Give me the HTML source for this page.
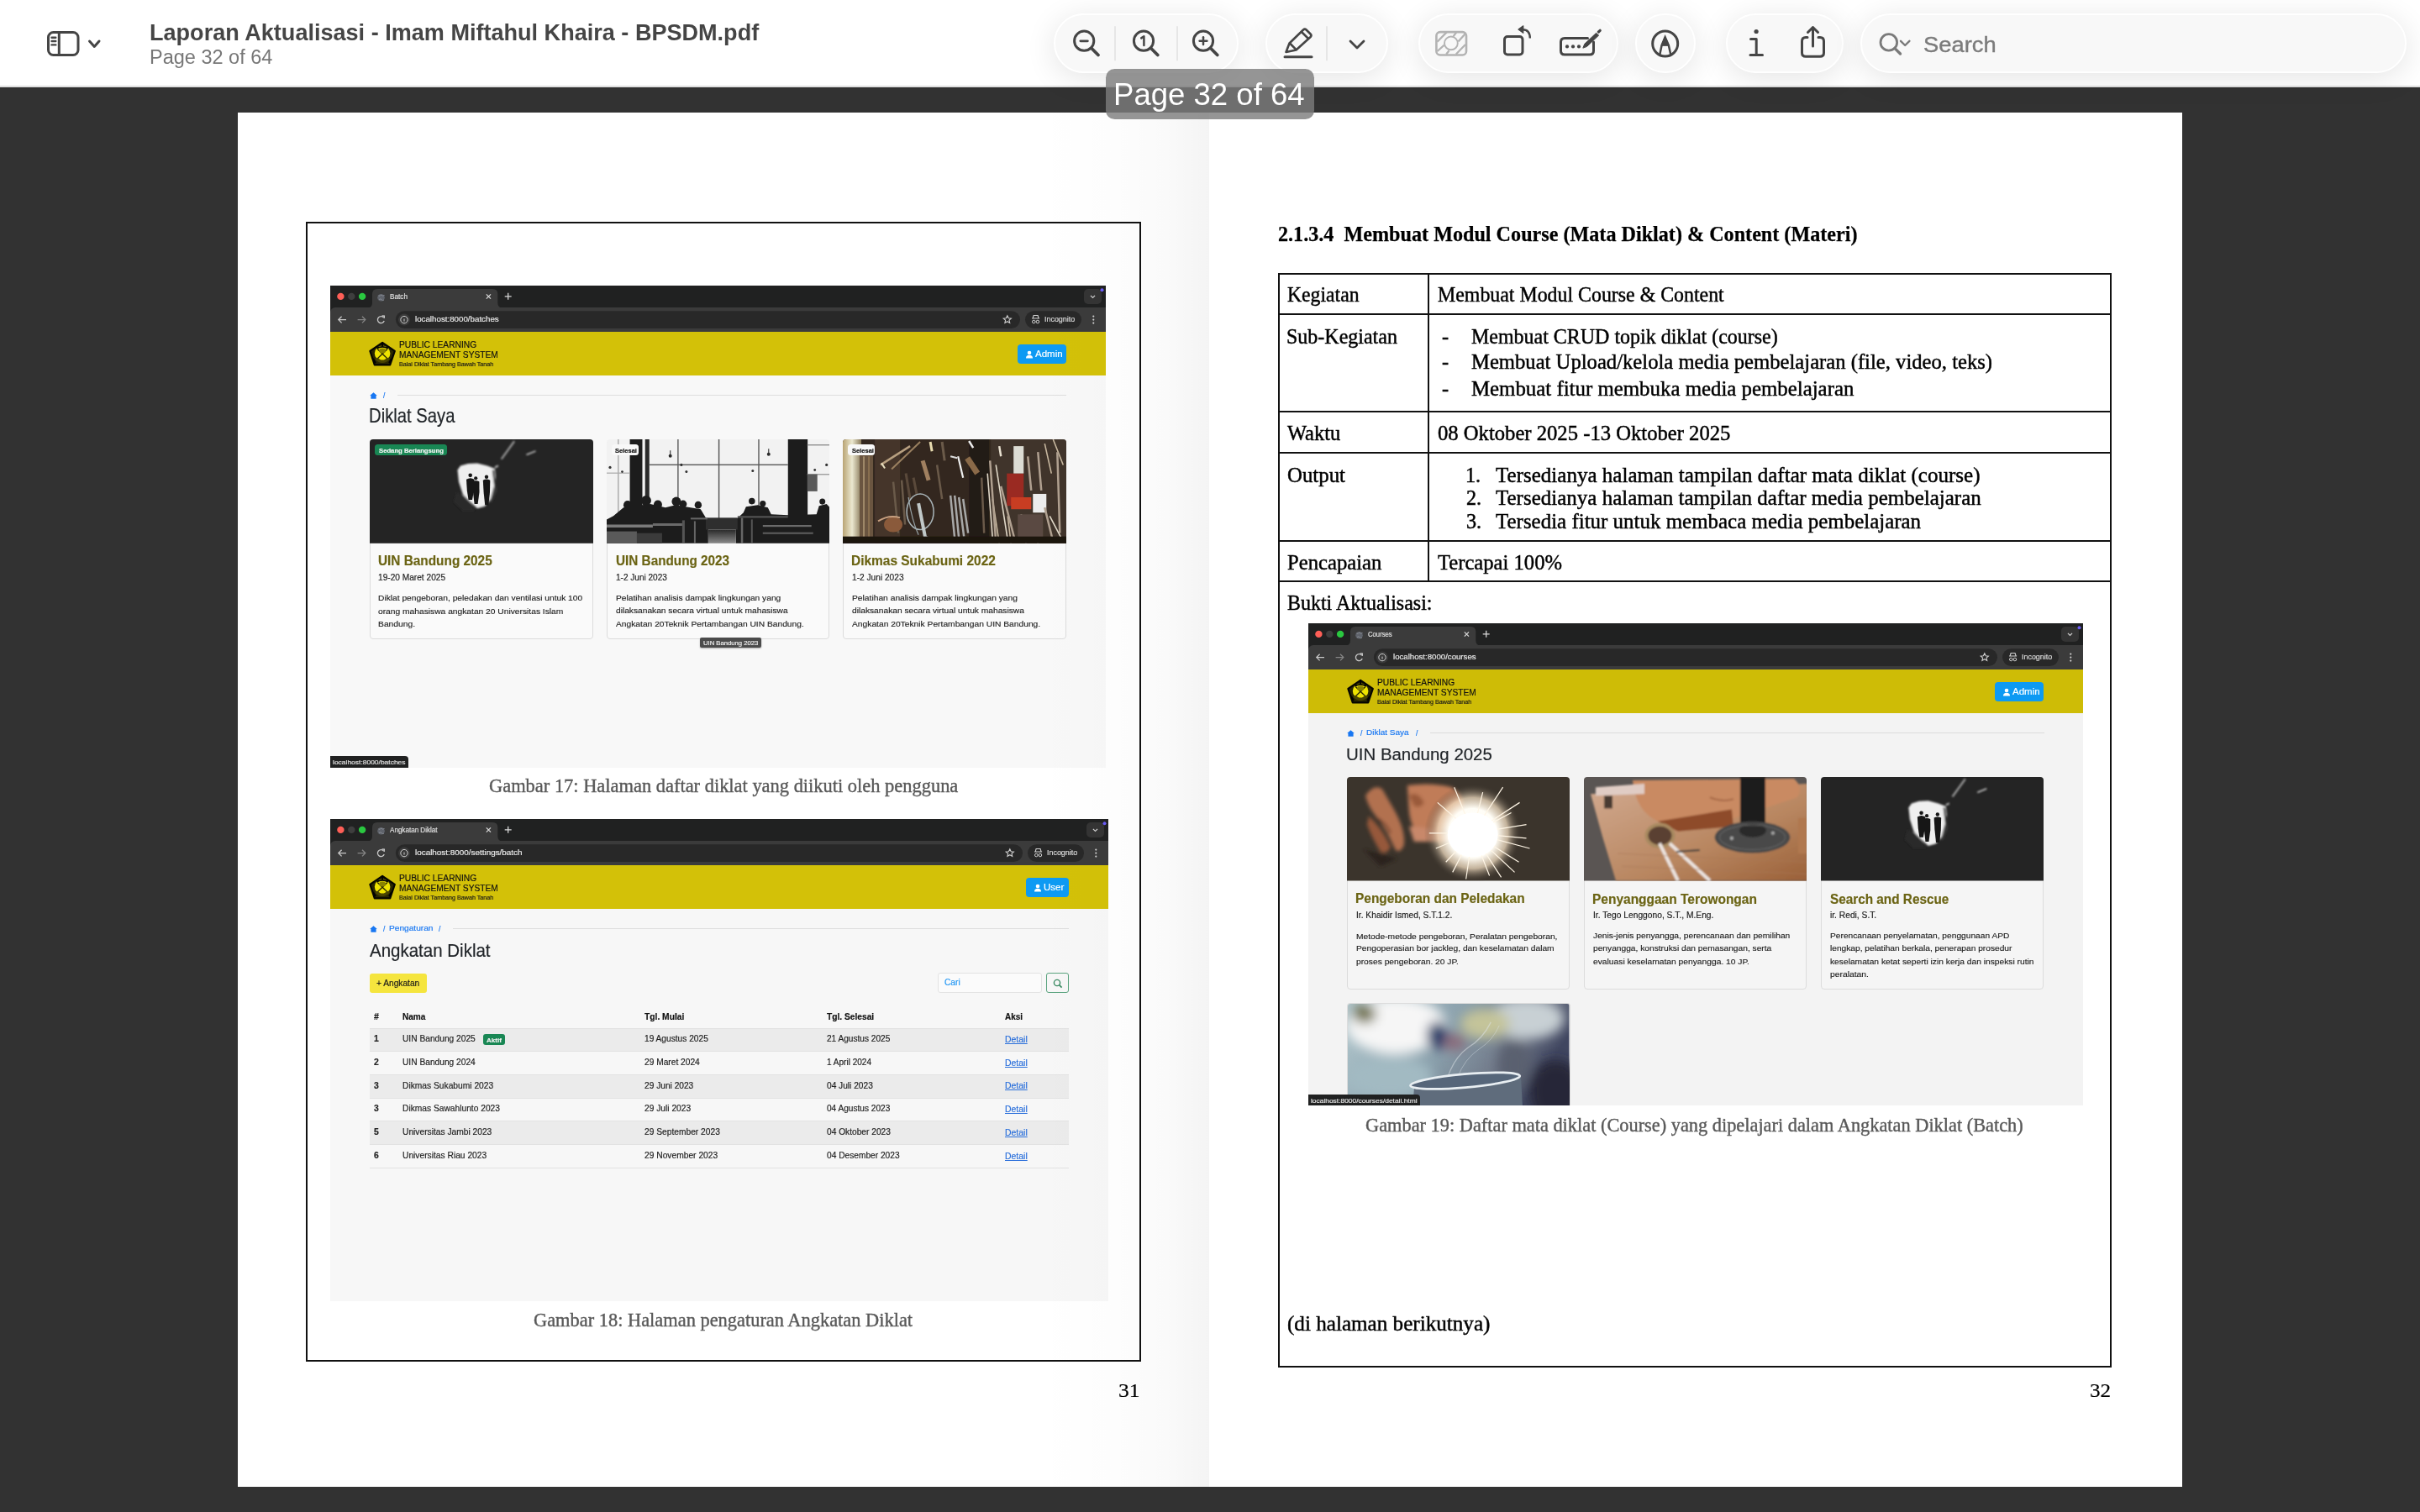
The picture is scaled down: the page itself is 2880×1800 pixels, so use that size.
<!DOCTYPE html>
<html><head><meta charset="utf-8"><style>
*{margin:0;padding:0;box-sizing:border-box}
html,body{width:2880px;height:1800px;overflow:hidden;background:#323232;font-family:"Liberation Sans",sans-serif}
.a{position:absolute}
.t{white-space:pre;line-height:1}
.pill{background:#f8f8f8;border:2px solid #fff;border-radius:36px;box-shadow:0 6px 36px rgba(0,0,0,0.11)}

</style></head><body>
<div class="a" style="left:0;top:0;width:2880px;height:102px;background:#fff"></div>
<div class="a" style="left:0;top:102px;width:2880px;height:1px;background:#dadada"></div>
<div class="a" style="left:0;top:103px;width:2880px;height:1px;background:#e6e6e6"></div>
<div class="a" style="left:0;top:104px;width:2880px;height:1px;background:#272727"></div>
<div class="a t" style="left:178.40px;top:25.85px;font-family:'Liberation Sans', sans-serif;font-size:27.00px;font-weight:bold;color:#454545;transform:scaleX(1.0022);transform-origin:0 0">Laporan Aktualisasi - Imam Miftahul Khaira - BPSDM.pdf</div>
<div class="a t" style="left:178.38px;top:57.45px;font-family:'Liberation Sans', sans-serif;font-size:23.00px;font-weight:normal;color:#777;transform:scaleX(1.0222);transform-origin:0 0">Page 32 of 64</div>
<div class="a pill" style="left:1254px;top:16px;width:220px;height:71px"></div>
<div class="a pill" style="left:1506px;top:16px;width:146px;height:71px"></div>
<div class="a pill" style="left:1688px;top:16px;width:238px;height:71px"></div>
<div class="a pill" style="left:1946px;top:16px;width:72px;height:71px"></div>
<div class="a pill" style="left:2054px;top:16px;width:140px;height:71px"></div>
<div class="a pill" style="left:2214px;top:16px;width:650px;height:71px"></div>
<svg class="a" style="left:0;top:0" width="2880" height="104" viewBox="0 0 2880 104" fill="none" stroke="#454545" stroke-width="3" stroke-linecap="round" stroke-linejoin="round">
<rect x="57.5" y="38.5" width="35.5" height="27" rx="6"/>
<line x1="70.3" y1="38.5" x2="70.3" y2="65.5"/>
<g stroke-width="2.4"><line x1="61.5" y1="44.7" x2="66.3" y2="44.7"/><line x1="61.5" y1="49" x2="66.3" y2="49"/><line x1="61.5" y1="53.4" x2="66.3" y2="53.4"/></g>
<polyline points="106.5,49 112.3,55.5 118,49" stroke-width="3"/>
<!-- zoom out -->
<circle cx="1290.2" cy="48.7" r="11.6"/><line x1="1299" y1="57.5" x2="1307" y2="65.5" stroke-width="3.8"/><line x1="1285.8" y1="48.8" x2="1294.4" y2="48.8" stroke-width="2.7"/>
<!-- zoom 1 -->
<circle cx="1361" cy="48.7" r="11.6"/><line x1="1369.8" y1="57.5" x2="1377.8" y2="65.5" stroke-width="3.8"/><polyline points="1358.2,45.4 1361.4,43.3 1361.4,54" stroke-width="2.5"/>
<!-- zoom in -->
<circle cx="1432" cy="48.7" r="11.6"/><line x1="1440.8" y1="57.5" x2="1448.8" y2="65.5" stroke-width="3.8"/><line x1="1427.6" y1="48.7" x2="1436.4" y2="48.7" stroke-width="2.5"/><line x1="1432" y1="44.3" x2="1432" y2="53.1" stroke-width="2.5"/>
<g stroke="#e6e6e6" stroke-width="2"><line x1="1327" y1="32" x2="1327" y2="71.5"/><line x1="1401" y1="32" x2="1401" y2="71.5"/><line x1="1579" y1="32" x2="1579" y2="71.5"/></g>
<!-- pencil -->
<path d="M1530.5,62 L1534.5,51.5 L1551,35.5 Q1552.8,33.8 1554.6,35.5 L1559.6,40.5 Q1561.3,42.3 1559.6,44 L1542.5,59.5 Z" stroke-width="2.6"/>
<line x1="1535.5" y1="52" x2="1541.8" y2="58.3" stroke-width="2.6"/><line x1="1549.5" y1="38.5" x2="1556.3" y2="45.2" stroke-width="2.6"/>
<line x1="1529" y1="67.7" x2="1561" y2="67.7" stroke-width="3"/>
<polyline points="1607,49 1615,57 1623,49" stroke-width="2.8"/>
<!-- redact -->
<g stroke="#b3b3b3" stroke-width="2.6" stroke-linecap="butt"><rect x="1709.4" y="38.1" width="35.6" height="27.4" rx="4.5"/><circle cx="1726.9" cy="51.4" r="7.9" stroke-width="1.9"/>
<line x1="1710.5" y1="49.8" x2="1721.6" y2="38.4" stroke-width="2.3"/><line x1="1710.5" y1="61" x2="1718.8" y2="53.6" stroke-width="2.3"/><line x1="1729.6" y1="43.4" x2="1733.2" y2="38.4" stroke-width="2.3"/>
<line x1="1735.4" y1="49.6" x2="1744" y2="39.9" stroke-width="2.3"/><line x1="1721.2" y1="64.5" x2="1724.6" y2="60.2" stroke-width="2.3"/><line x1="1732.8" y1="64.5" x2="1744" y2="53" stroke-width="2.3"/></g>
<!-- rotate -->
<rect x="1790.5" y="43.5" width="21.5" height="21.5" rx="3.5"/>
<path d="M1820.8,45.5 Q1820.8,35.2 1812,35.2" stroke-width="2.4" stroke-linecap="butt"/><path d="M1807,35.1 L1812.8,30.8 L1812.8,39.3 Z" fill="#454545" stroke-width="1.2"/>
<!-- signature -->
<path d="M1889.5,45.5 L1862,45.5 Q1857.5,45.5 1857.5,50 L1857.5,60.5 Q1857.5,65 1862,65 L1892,65 Q1896.5,65 1896.5,60.5 L1896.5,50" stroke-width="3"/>
<circle cx="1865" cy="55.4" r="2.1" fill="#454545" stroke="none"/><circle cx="1872" cy="55.4" r="2.1" fill="#454545" stroke="none"/><circle cx="1879" cy="55.4" r="2.1" fill="#454545" stroke="none"/>
<path d="M1884,56.8 L1885.8,52.3 L1899.6,39.3 L1902.6,42.1 L1888.8,55.2 Z" fill="#454545" stroke-width="1"/><line x1="1902.4" y1="38" x2="1904.2" y2="36.3" stroke-width="3.2"/>
<!-- markup -->
<circle cx="1981.7" cy="52" r="15"/>
<path d="M1975.3,65 L1977.6,53.8 L1981.6,44.2 L1985.8,53.8 L1988.3,65" stroke-width="2.5" stroke-linejoin="miter"/><path d="M1977.2,54 L1981.6,43.5 L1986.2,54 Z" fill="#454545" stroke-width="1"/>
<!-- info -->
<circle cx="2090.1" cy="37.5" r="2.6" fill="#454545" stroke="none"/>
<polyline points="2083.5,46.5 2090.2,46.5 2090.2,65.5" stroke-width="3"/><line x1="2083" y1="65.5" x2="2097.5" y2="65.5" stroke-width="3"/>
<!-- share -->
<path d="M2151,44.5 L2149,44.5 Q2144.5,44.5 2144.5,49 L2144.5,63 Q2144.5,67.3 2149,67.3 L2166,67.3 Q2170.5,67.3 2170.5,63 L2170.5,49 Q2170.5,44.5 2166,44.5 L2164,44.5" stroke-width="3"/>
<line x1="2157.5" y1="55" x2="2157.5" y2="33"/><polyline points="2151.5,38.5 2157.5,32.5 2163.5,38.5"/>
<!-- search -->
<g stroke="#7a7a7a" stroke-width="2.8"><circle cx="2247.8" cy="50.4" r="9.8"/><line x1="2255" y1="57.6" x2="2261.5" y2="64" stroke-width="3.4"/><polyline points="2262,48.8 2267.2,54 2272.4,48.8" stroke-width="2.4"/></g>
</svg>
<div class="a t" style="left:2288.95px;top:39.90px;font-family:'Liberation Sans', sans-serif;font-size:26.00px;font-weight:normal;color:#7b7b7b;transform:scaleX(1.0511);transform-origin:0 0;-webkit-text-stroke:0.4px #7b7b7b">Search</div>
<div class="a" style="left:283px;top:134px;width:1156px;height:1636px;background:#fff"></div>
<div class="a" style="left:1439px;top:134px;width:1158px;height:1636px;background:#fff"></div>
<div class="a" style="left:364px;top:264px;width:994px;height:1357px;border:2.3px solid #111"></div>
<div class="a" style="left:393.0px;top:340.0px;width:923.0px;height:574.0px;background:#f8f8f8;overflow:hidden"></div>
<div class="a" style="left:393.0px;top:340.0px;width:923.0px;height:32px;background:#202121"></div>
<svg class="a" style="left:437.0px;top:340.0px" width="170" height="27" viewBox="0 0 170 27"><path d="M0,26.5 Q6,26.5 6,20.5 V10 Q6,4 12,4 H149.3 Q155.3,4 155.3,10 V20.5 Q155.3,26.5 161.3,26.5 Z" fill="#3b3b3b"/></svg>
<div class="a" style="left:393.0px;top:366.0px;width:923.0px;height:29px;background:#3b3b3b;border-radius:6px 0 0 0"></div>
<svg class="a" style="left:393.0px;top:340.0px" width="923.0" height="56" viewBox="0 0 923.0 56"><circle cx="12.4" cy="12.9" r="4.2" fill="#fe5f57"/><circle cx="25.3" cy="12.9" r="4.2" fill="#3e3e3e"/><circle cx="38.1" cy="12.9" r="4.2" fill="#2ac840"/><circle cx="60.5" cy="14.2" r="4.3" fill="#5f636b"/><path d="M57.5,12 q2,1 3,-1 q2,2 4,0.5 M58,16.5 q2,-1.5 3.5,0.5 q1,1.2 2.5,0" stroke="#8a8e96" stroke-width="0.9" fill="none"/><path d="M185.8,10.4 L191,15.6 M191,10.4 L185.8,15.6" stroke="#d8d8d8" stroke-width="1.3"/><path d="M211.7,8.8 V16.8 M207.7,12.8 H215.7" stroke="#d8d8d8" stroke-width="1.3"/><rect x="897.0" y="4" width="21" height="18" rx="5" fill="#343434"/><path d="M904.9,11.8 l2.6,2.6 l2.6,-2.6" stroke="#d0d0d0" stroke-width="1.2" fill="none"/><circle cx="918.5" cy="5.2" r="2" fill="#6b5cf6"/><path d="M19,40.6 H10 M13.6,36.8 L9.8,40.6 L13.6,44.4" stroke="#c8c8c8" stroke-width="1.3" fill="none"/><path d="M32.6,40.6 H41.6 M38,36.8 L41.8,40.6 L38,44.4" stroke="#858585" stroke-width="1.3" fill="none"/><path d="M63.6,38.2 A4,4 0 1 0 64.2,42" stroke="#c8c8c8" stroke-width="1.3" fill="none"/><path d="M61.6,36 L64.4,36.2 L64.2,39" stroke="#c8c8c8" stroke-width="1.3" fill="none"/><rect x="77.9" y="30.2" width="743.1" height="20.8" rx="10.4" fill="#282828"/><circle cx="88" cy="40.6" r="7" fill="#3a3a3a"/><circle cx="88" cy="40.6" r="4.2" stroke="#d0d0d0" stroke-width="1" fill="none"/><path d="M88,39.6 V42.6" stroke="#d0d0d0" stroke-width="1"/><path d="M805.8,35.8 l1.4,3 3.2,0.3 -2.4,2.1 0.7,3.2 -2.9,-1.7 -2.9,1.7 0.7,-3.2 -2.4,-2.1 3.2,-0.3 z" stroke="#d0d0d0" stroke-width="1.1" fill="none"/><rect x="827.0" y="30.2" width="67" height="20.8" rx="10.4" fill="#282828"/><path d="M835.1,39 h9 M836.1,39 l1,-3.5 h5 l1,3.5" stroke="#d0d0d0" stroke-width="1.1" fill="none"/><circle cx="837.3" cy="43" r="1.8" stroke="#d0d0d0" stroke-width="1" fill="none"/><circle cx="841.9" cy="43" r="1.8" stroke="#d0d0d0" stroke-width="1" fill="none"/><circle cx="908.3" cy="36.6" r="1.1" fill="#d0d0d0"/><circle cx="908.3" cy="40.6" r="1.1" fill="#d0d0d0"/><circle cx="908.3" cy="44.6" r="1.1" fill="#d0d0d0"/></svg>
<div class="a" style="left:393.0px;top:395.0px;width:923.0px;height:52px;background:#d3c108"></div>
<svg class="a" style="left:438.5px;top:406.0px" width="32" height="31" viewBox="0 0 32 31"><path d="M16.1,1.8 L30.8,11.8 L25.2,28.4 L6.8,28.4 L1.4,11.8 Z" fill="#2a2700" stroke="#050500" stroke-width="2.2" stroke-linejoin="round"/><circle cx="16.1" cy="14.8" r="9.3" fill="#eee300"/><path d="M7.5,22 Q16,30 24.7,22 L24,19.5 Q16,24 8.2,19.5 Z" fill="#4a4500"/><path d="M9.3,8.6 Q16.1,5.2 22.9,8.6" stroke="#000" stroke-width="1.8" fill="none"/><rect x="15.2" y="1.8" width="1.8" height="4.6" fill="#000"/><path d="M10.2,9.5 L21.8,20.8 M22,9.5 L10.4,20.8" stroke="#2a2600" stroke-width="1.4"/><ellipse cx="16.1" cy="11.5" rx="4" ry="3" fill="#8a8300"/><ellipse cx="16.1" cy="20.5" rx="3.6" ry="2" fill="#eee300"/><path d="M5,21 L8,26 M27,21 L24,26" stroke="#000" stroke-width="2"/></svg>
<div class="a t" style="left:475.20px;top:404.82px;font-family:'Liberation Sans', sans-serif;font-size:10.80px;font-weight:normal;color:#111;transform:scaleX(0.9483);transform-origin:0 0;-webkit-text-stroke:0.18px #111">PUBLIC LEARNING</div>
<div class="a t" style="left:475.20px;top:417.02px;font-family:'Liberation Sans', sans-serif;font-size:10.80px;font-weight:normal;color:#111;transform:scaleX(0.9457);transform-origin:0 0;-webkit-text-stroke:0.18px #111">MANAGEMENT SYSTEM</div>
<div class="a t" style="left:475.20px;top:430.72px;font-family:'Liberation Sans', sans-serif;font-size:6.80px;font-weight:normal;color:#1a1a1a;transform:scaleX(1.0519);transform-origin:0 0;-webkit-text-stroke:0.18px #1a1a1a">Balai Diklat Tambang Bawah Tanah</div>
<div class="a" style="left:1211.0px;top:409.7px;width:58.0px;height:23.8px;background:#0d9af3;border-radius:4px"></div>
<svg class="a" style="left:1219.5px;top:416.5px" width="10" height="10" viewBox="0 0 10 10"><circle cx="5" cy="3" r="2.3" fill="#fff"/><path d="M1,9.5 Q1,5.8 5,5.8 Q9,5.8 9,9.5 Z" fill="#fff"/></svg>
<div class="a t" style="left:1231.50px;top:415.73px;font-family:'Liberation Sans', sans-serif;font-size:11.50px;font-weight:normal;color:#fff;transform:scaleX(1.0001);transform-origin:0 0;-webkit-text-stroke:0.18px #fff">Admin</div>
<div class="a t" style="left:463.60px;top:348.50px;font-family:'Liberation Sans', sans-serif;font-size:8.70px;font-weight:normal;color:#e0e0e0;transform:scaleX(0.9427);transform-origin:0 0;-webkit-text-stroke:0.18px #e0e0e0">Batch</div>
<div class="a t" style="left:493.70px;top:375.98px;font-family:'Liberation Sans', sans-serif;font-size:9.20px;font-weight:normal;color:#e8e8e8;transform:scaleX(1.0605);transform-origin:0 0;-webkit-text-stroke:0.18px #e8e8e8">localhost:8000/batches</div>
<div class="a t" style="left:1243.20px;top:376.32px;font-family:'Liberation Sans', sans-serif;font-size:8.80px;font-weight:normal;color:#dcdcdc;transform:scaleX(1.0137);transform-origin:0 0;-webkit-text-stroke:0.18px #dcdcdc">Incognito</div>
<svg class="a" style="left:439.5px;top:467.3px" width="9" height="8" viewBox="0 0 9 8"><path d="M4.5,0.3 L8.8,4 L7.6,4 L7.6,7.8 L1.4,7.8 L1.4,4 L0.2,4 Z" fill="#1877f2"/></svg>
<div class="a t" style="left:455.50px;top:466.77px;font-family:'Liberation Sans', sans-serif;font-size:8.50px;font-weight:normal;color:#1877f2;transform:scaleX(1.0001);transform-origin:0 0;-webkit-text-stroke:0.18px #1877f2">/</div>
<div class="a" style="left:472.6px;top:470.3px;width:796.4px;height:1px;background:#dedede"></div>
<div class="a t" style="left:439.13px;top:484.11px;font-family:'Liberation Sans', sans-serif;font-size:23.40px;font-weight:normal;color:#212529;transform:scaleX(0.8665);transform-origin:0 0;-webkit-text-stroke:0.18px #212529">Diklat Saya</div>
<div class="a" style="left:439.5px;top:523.5px;width:266.0px;height:237.0px;background:#fafafa;border:1px solid #dcdcdc;border-radius:4px"></div>
<div class="a" style="left:439.5px;top:523.0px;width:266.0px;height:123.8px;border-radius:4px 4px 0 0;overflow:hidden"><svg width="266.0" height="123.8" viewBox="0 0 266 122" preserveAspectRatio="none" style="display:block"><defs><filter id="g1" x="-20%" y="-20%" width="140%" height="140%"><feGaussianBlur stdDeviation="1.1"/></filter><filter id="g1b" x="-20%" y="-20%" width="140%" height="140%"><feGaussianBlur stdDeviation="0.5"/></filter></defs><rect width="266" height="122" fill="#242424"/><g filter="url(#g1)"><polygon points="104.5,36 108,31 117,28.5 128,28 140,31 149,34.5 150,45 147,60 144,70 137,78.5 128,81 120,74 111,65 106,50" fill="#efefef"/><path d="M156.7,23.2 L172.1,2.2" stroke="#9a9a9a" stroke-width="2.2"/><path d="M186.5,18.2 L197.5,13.8" stroke="#b8b8b8" stroke-width="1.8"/><path d="M149,33 L153,31" stroke="#bbb" stroke-width="2"/><polygon points="103,62 112,67 120,76 125,84 110,84 100,74" fill="#2c2c2c"/><path d="M147,36 L150,60 L144,74" stroke="#3a3a3a" stroke-width="2.5" fill="none"/></g><g fill="#161616" filter="url(#g1b)"><circle cx="119.7" cy="42.2" r="2.3"/><path d="M115,47 Q119.7,44 124.5,47 L124,60 L122,71 L117.5,71 L115.8,60 Z"/><circle cx="126.2" cy="45.6" r="2.1"/><path d="M122.2,49.5 Q126.2,47.4 130.4,49.5 L130.5,62 L128.6,76 L124.6,76 L123,62 Z"/><circle cx="139" cy="44" r="2.2"/><path d="M134.8,48 Q139,45.8 143.3,48 L143,62 L141.4,77 L137.2,77 L135.6,62 Z"/></g></svg></div>
<div class="a" style="left:445.5px;top:529.2px;width:86.7px;height:13.3px;background:#198754;border-radius:3.5px"></div>
<div class="a t" style="left:450.50px;top:532.64px;font-family:'Liberation Sans', sans-serif;font-size:7.60px;font-weight:bold;color:#f4f4f4;transform:scaleX(1.0130);transform-origin:0 0;-webkit-text-stroke:0.18px #f4f4f4">Sedang Berlangsung</div>
<div class="a t" style="left:450.40px;top:659.23px;font-family:'Liberation Sans', sans-serif;font-size:16.20px;font-weight:bold;color:#6b6414;transform:scaleX(0.9489);transform-origin:0 0;-webkit-text-stroke:0.18px #6b6414">UIN Bandung 2025</div>
<div class="a t" style="left:450.40px;top:682.50px;font-family:'Liberation Sans', sans-serif;font-size:10.00px;font-weight:normal;color:#1e1e1e;transform:scaleX(1.0141);transform-origin:0 0;-webkit-text-stroke:0.18px #1e1e1e">19-20 Maret 2025</div>
<div class="a t" style="left:450.40px;top:707.38px;font-family:'Liberation Sans', sans-serif;font-size:9.90px;font-weight:normal;color:#222;transform:scaleX(1.0349);transform-origin:0 0;-webkit-text-stroke:0.15px #222">Diklat pengeboran, peledakan dan ventilasi untuk 100</div>
<div class="a t" style="left:450.40px;top:722.59px;font-family:'Liberation Sans', sans-serif;font-size:9.90px;font-weight:normal;color:#222;transform:scaleX(1.0373);transform-origin:0 0;-webkit-text-stroke:0.15px #222">orang mahasiswa angkatan 20 Universitas Islam</div>
<div class="a t" style="left:450.40px;top:737.88px;font-family:'Liberation Sans', sans-serif;font-size:9.90px;font-weight:normal;color:#222;transform:scaleX(1.0448);transform-origin:0 0;-webkit-text-stroke:0.15px #222">Bandung.</div>
<div class="a" style="left:721.8px;top:523.5px;width:265.7px;height:237.0px;background:#fafafa;border:1px solid #dcdcdc;border-radius:4px"></div>
<div class="a" style="left:721.8px;top:523.0px;width:265.7px;height:123.8px;border-radius:4px 4px 0 0;overflow:hidden"><svg width="265.7" height="123.8" viewBox="0 0 266 122" preserveAspectRatio="none" style="display:block"><defs><filter id="g2"><feGaussianBlur stdDeviation="0.6"/></filter><linearGradient id="g2f" x1="0" y1="0" x2="0" y2="1"><stop offset="0" stop-color="#2a2a2a"/><stop offset="1" stop-color="#8a8a8a"/></linearGradient></defs><rect width="266" height="122" fill="#f2f2f2"/><g filter="url(#g2)"><rect x="27.6" y="0" width="14.9" height="90" fill="#1c1c1c"/><rect x="45.8" y="0" width="5" height="90" fill="#2a2a2a"/><rect x="216" y="0" width="23.4" height="100" fill="#1e1e1e"/><rect x="13" y="0" width="1.6" height="88" fill="#b0b0b0"/><rect x="84.3" y="0" width="1.4" height="84" fill="#5a5a5a"/><rect x="133" y="0" width="1.5" height="95" fill="#5a5a5a"/><rect x="180.5" y="0" width="1.4" height="82" fill="#5a5a5a"/><rect x="50" y="29.2" width="166" height="1.4" fill="#5a5a5a"/><rect x="0" y="39" width="27" height="1.2" fill="#aaa"/><rect x="239" y="6" width="27" height="1.3" fill="#8a8a8a"/><rect x="239" y="40.5" width="27" height="1.3" fill="#999"/><path d="M75.8,13 v6" stroke="#333" stroke-width="1.1"/><circle cx="75.8" cy="19.5" r="2" fill="#2a2a2a"/><path d="M193,11 v6" stroke="#333" stroke-width="1.1"/><circle cx="193" cy="17.5" r="2" fill="#2a2a2a"/><circle cx="4" cy="33" r="1.6" fill="#333"/><circle cx="18.5" cy="38" r="1.4" fill="#333"/><circle cx="89" cy="30" r="1.6" fill="#333"/><circle cx="95" cy="38" r="1.5" fill="#333"/><circle cx="174" cy="37" r="1.5" fill="#333"/><circle cx="262" cy="30" r="1.6" fill="#333"/><circle cx="248" cy="36" r="1.4" fill="#333"/><rect x="239" y="41" width="12" height="20" fill="#5a5a5a"/><g fill="#1c1c1c"><circle cx="25" cy="77" r="5"/><circle cx="47" cy="72" r="6"/><circle cx="61" cy="76.5" r="5"/><circle cx="83" cy="73" r="5.5"/><circle cx="91" cy="76" r="4.5"/><circle cx="109" cy="77" r="4.2"/><circle cx="173" cy="72.5" r="3.8"/><circle cx="186" cy="75.5" r="3.6"/><circle cx="257" cy="73" r="3.5"/></g><path d="M0,94 L8,90 L20,80 L35,78 L52,76 L70,80 L82,77 L100,80 L112,82 L118,92 L121,96 L121,122 L0,122 Z" fill="#1c1c1c"/><path d="M154,94 L163,86 L166,79 L180,77 L192,80 L196,88 L216,89 L250,88 L253,78 L262,76 L266,80 L266,122 L154,122 Z" fill="#1c1c1c"/><rect x="118" y="92" width="38" height="14" fill="#2e2e2e"/><rect x="121" y="106" width="33" height="16" fill="url(#g2f)"/><rect x="0" y="100" width="55" height="3.5" fill="#7a7a7a"/><rect x="55" y="98.5" width="35" height="3" fill="#6a6a6a"/><rect x="0" y="108" width="36" height="14" fill="#5a5a5a"/><rect x="36" y="110" width="30" height="12" fill="#3a3a3a"/><rect x="90" y="95" width="3" height="27" fill="#555"/><rect x="104" y="96" width="2" height="26" fill="#666"/><rect x="160" y="92" width="2.5" height="30" fill="#666"/><rect x="172" y="94" width="2" height="28" fill="#555"/><rect x="186" y="100.5" width="58" height="2.2" fill="#6a6a6a"/><rect x="186" y="109" width="60" height="2.2" fill="#5a5a5a"/><rect x="100" y="92" width="20" height="2" fill="#666"/><rect x="156" y="90" width="60" height="2" fill="#555"/></g></svg></div>
<div class="a" style="left:727.8px;top:529.2px;width:32.0px;height:13.3px;background:#f8f8f8;border-radius:3.5px"></div>
<div class="a t" style="left:732.30px;top:532.64px;font-family:'Liberation Sans', sans-serif;font-size:7.60px;font-weight:bold;color:#111;transform:scaleX(0.9897);transform-origin:0 0;-webkit-text-stroke:0.18px #111">Selesai</div>
<div class="a t" style="left:732.70px;top:658.93px;font-family:'Liberation Sans', sans-serif;font-size:16.20px;font-weight:bold;color:#6b6414;transform:scaleX(0.9447);transform-origin:0 0;-webkit-text-stroke:0.18px #6b6414">UIN Bandung 2023</div>
<div class="a t" style="left:732.70px;top:682.50px;font-family:'Liberation Sans', sans-serif;font-size:10.00px;font-weight:normal;color:#1e1e1e;transform:scaleX(1.0043);transform-origin:0 0;-webkit-text-stroke:0.18px #1e1e1e">1-2 Juni 2023</div>
<div class="a t" style="left:732.70px;top:706.88px;font-family:'Liberation Sans', sans-serif;font-size:9.90px;font-weight:normal;color:#222;transform:scaleX(1.0365);transform-origin:0 0;-webkit-text-stroke:0.15px #222">Pelatihan analisis dampak lingkungan yang</div>
<div class="a t" style="left:732.70px;top:722.19px;font-family:'Liberation Sans', sans-serif;font-size:9.90px;font-weight:normal;color:#222;transform:scaleX(1.0324);transform-origin:0 0;-webkit-text-stroke:0.15px #222">dilaksanakan secara virtual untuk mahasiswa</div>
<div class="a t" style="left:732.70px;top:737.59px;font-family:'Liberation Sans', sans-serif;font-size:9.90px;font-weight:normal;color:#222;transform:scaleX(1.0372);transform-origin:0 0;-webkit-text-stroke:0.15px #222">Angkatan 20Teknik Pertambangan UIN Bandung.</div>
<div class="a" style="left:1003.0px;top:523.5px;width:266.3px;height:237.0px;background:#fafafa;border:1px solid #dcdcdc;border-radius:4px"></div>
<div class="a" style="left:1003.0px;top:523.0px;width:266.3px;height:123.8px;border-radius:4px 4px 0 0;overflow:hidden"><svg width="266.3" height="123.8" viewBox="0 0 266 122" preserveAspectRatio="none" style="display:block"><defs><filter id="g3"><feGaussianBlur stdDeviation="0.7"/></filter><linearGradient id="g3l" x1="0" y1="0" x2="1" y2="0"><stop offset="0" stop-color="#b9a474"/><stop offset="0.5" stop-color="#ebe8d0"/><stop offset="1" stop-color="#8a7a5a"/></linearGradient></defs><rect width="266" height="122" fill="#33271f"/><g filter="url(#g3)"><rect x="0" y="0" width="22" height="115" fill="url(#g3l)"/><rect x="20" y="18" width="16" height="97" fill="#6a5440"/><rect x="24" y="20" width="2" height="95" fill="#a08a6a"/><rect x="30" y="20" width="2" height="95" fill="#8a7050"/><rect x="38" y="0" width="30" height="122" fill="#45352a"/><rect x="150" y="0" width="24" height="122" fill="#231a15"/><rect x="176" y="0" width="90" height="122" fill="#4a3d34" opacity="0.6"/><path d="M60,50 L66,110 M70,48 L74,100 M112,30 L118,70 M165,45 L168,110" stroke="#6a5a4a" stroke-width="2.5"/><path d="M250,0 L262,30 M240,5 L248,40 M196,90 L200,122 M178,70 L186,122" stroke="#c8b8a0" stroke-width="1.6"/><path d="M45,30 L80,8" stroke="#b8a080" stroke-width="2.5"/><path d="M58,35 L92,3" stroke="#9a8060" stroke-width="2"/><path d="M46,28 L50,34" stroke="#e8e0c0" stroke-width="2"/><path d="M104,3 L106,14" stroke="#e8dcb0" stroke-width="3"/><path d="M137,20 L143,45" stroke="#eee" stroke-width="2.2"/><path d="M128,20 L136,22" stroke="#ddd" stroke-width="2"/><path d="M95,25 L102,48" stroke="#a08060" stroke-width="5"/><path d="M148,22 L160,40" stroke="#8a6a48" stroke-width="7"/><path d="M150,2 L155,10" stroke="#eee" stroke-width="2.5"/><path d="M118,3 L121,25" stroke="#6a5a4a" stroke-width="3"/><path d="M186,8 L188,20" stroke="#e8e0d0" stroke-width="2.5"/><path d="M75,40 L80,70 M84,45 L88,65" stroke="#5a4a3a" stroke-width="3"/><ellipse cx="92" cy="85" rx="16" ry="21" stroke="#a8b4b8" stroke-width="1.5" fill="none"/><path d="M90,75 L98,115 L105,118" stroke="#c0c8c8" stroke-width="4" fill="none"/><path d="M78,68 Q82,95 90,112" stroke="#98a4a8" stroke-width="1.2" fill="none"/><path d="M128,66 L133,116 M133,66 L138,116 M138,68 L144,114 M143,70 L149,110" stroke="#a8a8a8" stroke-width="2.5"/><ellipse cx="60" cy="100" rx="11" ry="9" fill="#8a5a3a"/><path d="M42,96 Q55,88 68,92" stroke="#c8a080" stroke-width="2" fill="none"/><rect x="195" y="40" width="20" height="38" fill="#9a2c20"/><rect x="200" y="68" width="24" height="14" fill="#c83c24"/><rect x="226" y="64" width="16" height="22" fill="#ececec"/><rect x="203" y="8" width="12" height="32" fill="#dcdcd4"/><path d="M175,25 L182,120 M188,55 L205,120 M240,80 L250,120 M255,15 L258,110 M232,15 L236,60 M220,20 L224,60" stroke="#b0a090" stroke-width="2.5"/><path d="M172,40 L178,115 M182,30 L196,118 M246,90 L262,120" stroke="#e0d8c8" stroke-width="1.6"/><path d="M212,88 L218,122 M228,90 L232,122" stroke="#c8b8a8" stroke-width="2"/><rect x="208" y="88" width="30" height="30" fill="#5a4a42"/><rect x="0" y="114" width="266" height="8" fill="#1c1410"/></g></svg></div>
<div class="a" style="left:1009.0px;top:529.2px;width:32.0px;height:13.3px;background:#f8f8f8;border-radius:3.5px"></div>
<div class="a t" style="left:1013.50px;top:532.64px;font-family:'Liberation Sans', sans-serif;font-size:7.60px;font-weight:bold;color:#111;transform:scaleX(0.9897);transform-origin:0 0;-webkit-text-stroke:0.18px #111">Selesai</div>
<div class="a t" style="left:1012.94px;top:658.93px;font-family:'Liberation Sans', sans-serif;font-size:16.20px;font-weight:bold;color:#6b6414;transform:scaleX(0.9550);transform-origin:0 0;-webkit-text-stroke:0.18px #6b6414">Dikmas Sukabumi 2022</div>
<div class="a t" style="left:1013.90px;top:682.50px;font-family:'Liberation Sans', sans-serif;font-size:10.00px;font-weight:normal;color:#1e1e1e;transform:scaleX(1.0157);transform-origin:0 0;-webkit-text-stroke:0.18px #1e1e1e">1-2 Juni 2023</div>
<div class="a t" style="left:1013.90px;top:706.88px;font-family:'Liberation Sans', sans-serif;font-size:9.90px;font-weight:normal;color:#222;transform:scaleX(1.0402);transform-origin:0 0;-webkit-text-stroke:0.15px #222">Pelatihan analisis dampak lingkungan yang</div>
<div class="a t" style="left:1013.90px;top:722.19px;font-family:'Liberation Sans', sans-serif;font-size:9.90px;font-weight:normal;color:#222;transform:scaleX(1.0339);transform-origin:0 0;-webkit-text-stroke:0.15px #222">dilaksanakan secara virtual untuk mahasiswa</div>
<div class="a t" style="left:1013.90px;top:737.59px;font-family:'Liberation Sans', sans-serif;font-size:9.90px;font-weight:normal;color:#222;transform:scaleX(1.0391);transform-origin:0 0;-webkit-text-stroke:0.15px #222">Angkatan 20Teknik Pertambangan UIN Bandung.</div>
<div class="a" style="left:832.7px;top:758.5px;width:73px;height:12.3px;background:#4b4b4b;border-radius:2px;box-shadow:0 1px 2px rgba(0,0,0,.3)"></div>
<div class="a t" style="left:836.50px;top:761.85px;font-family:'Liberation Sans', sans-serif;font-size:7.00px;font-weight:normal;color:#f0f0f0;transform:scaleX(1.0980);transform-origin:0 0;-webkit-text-stroke:0.18px #f0f0f0">UIN Bandung 2023</div>
<div class="a" style="left:393.0px;top:900.0px;width:93.3px;height:13.5px;background:#202121;border-radius:0 4px 0 0"></div>
<div class="a t" style="left:396.00px;top:904.18px;font-family:'Liberation Sans', sans-serif;font-size:7.20px;font-weight:normal;color:#e0e0e0;transform:scaleX(1.1768);transform-origin:0 0;-webkit-text-stroke:0.18px #e0e0e0">localhost:8000/batches</div>
<div class="a t" style="left:581.50px;top:924.21px;font-family:'Liberation Serif', serif;font-size:23.00px;font-weight:normal;color:#595959;transform:scaleX(0.9756);transform-origin:0 0;-webkit-text-stroke:0.4px #595959">Gambar 17: Halaman daftar diklat yang diikuti oleh pengguna</div>
<div class="a" style="left:393.0px;top:975.0px;width:926.0px;height:574.0px;background:#f7f7f7;overflow:hidden"></div>
<div class="a" style="left:393.0px;top:975.0px;width:926.0px;height:32px;background:#202121"></div>
<svg class="a" style="left:437.0px;top:975.0px" width="170" height="27" viewBox="0 0 170 27"><path d="M0,26.5 Q6,26.5 6,20.5 V10 Q6,4 12,4 H149.3 Q155.3,4 155.3,10 V20.5 Q155.3,26.5 161.3,26.5 Z" fill="#3b3b3b"/></svg>
<div class="a" style="left:393.0px;top:1001.0px;width:926.0px;height:29px;background:#3b3b3b;border-radius:6px 0 0 0"></div>
<svg class="a" style="left:393.0px;top:975.0px" width="926.0" height="56" viewBox="0 0 926.0 56"><circle cx="12.4" cy="12.9" r="4.2" fill="#fe5f57"/><circle cx="25.3" cy="12.9" r="4.2" fill="#3e3e3e"/><circle cx="38.1" cy="12.9" r="4.2" fill="#2ac840"/><circle cx="60.5" cy="14.2" r="4.3" fill="#5f636b"/><path d="M57.5,12 q2,1 3,-1 q2,2 4,0.5 M58,16.5 q2,-1.5 3.5,0.5 q1,1.2 2.5,0" stroke="#8a8e96" stroke-width="0.9" fill="none"/><path d="M185.8,10.4 L191,15.6 M191,10.4 L185.8,15.6" stroke="#d8d8d8" stroke-width="1.3"/><path d="M211.7,8.8 V16.8 M207.7,12.8 H215.7" stroke="#d8d8d8" stroke-width="1.3"/><rect x="900.0" y="4" width="21" height="18" rx="5" fill="#343434"/><path d="M907.9,11.8 l2.6,2.6 l2.6,-2.6" stroke="#d0d0d0" stroke-width="1.2" fill="none"/><circle cx="921.5" cy="5.2" r="2" fill="#6b5cf6"/><path d="M19,40.6 H10 M13.6,36.8 L9.8,40.6 L13.6,44.4" stroke="#c8c8c8" stroke-width="1.3" fill="none"/><path d="M32.6,40.6 H41.6 M38,36.8 L41.8,40.6 L38,44.4" stroke="#858585" stroke-width="1.3" fill="none"/><path d="M63.6,38.2 A4,4 0 1 0 64.2,42" stroke="#c8c8c8" stroke-width="1.3" fill="none"/><path d="M61.6,36 L64.4,36.2 L64.2,39" stroke="#c8c8c8" stroke-width="1.3" fill="none"/><rect x="77.9" y="30.2" width="746.1" height="20.8" rx="10.4" fill="#282828"/><circle cx="88" cy="40.6" r="7" fill="#3a3a3a"/><circle cx="88" cy="40.6" r="4.2" stroke="#d0d0d0" stroke-width="1" fill="none"/><path d="M88,39.6 V42.6" stroke="#d0d0d0" stroke-width="1"/><path d="M808.8,35.8 l1.4,3 3.2,0.3 -2.4,2.1 0.7,3.2 -2.9,-1.7 -2.9,1.7 0.7,-3.2 -2.4,-2.1 3.2,-0.3 z" stroke="#d0d0d0" stroke-width="1.1" fill="none"/><rect x="830.0" y="30.2" width="67" height="20.8" rx="10.4" fill="#282828"/><path d="M838.1,39 h9 M839.1,39 l1,-3.5 h5 l1,3.5" stroke="#d0d0d0" stroke-width="1.1" fill="none"/><circle cx="840.3" cy="43" r="1.8" stroke="#d0d0d0" stroke-width="1" fill="none"/><circle cx="844.9" cy="43" r="1.8" stroke="#d0d0d0" stroke-width="1" fill="none"/><circle cx="911.3" cy="36.6" r="1.1" fill="#d0d0d0"/><circle cx="911.3" cy="40.6" r="1.1" fill="#d0d0d0"/><circle cx="911.3" cy="44.6" r="1.1" fill="#d0d0d0"/></svg>
<div class="a" style="left:393.0px;top:1030.0px;width:926.0px;height:52px;background:#d3c108"></div>
<svg class="a" style="left:438.5px;top:1041.0px" width="32" height="31" viewBox="0 0 32 31"><path d="M16.1,1.8 L30.8,11.8 L25.2,28.4 L6.8,28.4 L1.4,11.8 Z" fill="#2a2700" stroke="#050500" stroke-width="2.2" stroke-linejoin="round"/><circle cx="16.1" cy="14.8" r="9.3" fill="#eee300"/><path d="M7.5,22 Q16,30 24.7,22 L24,19.5 Q16,24 8.2,19.5 Z" fill="#4a4500"/><path d="M9.3,8.6 Q16.1,5.2 22.9,8.6" stroke="#000" stroke-width="1.8" fill="none"/><rect x="15.2" y="1.8" width="1.8" height="4.6" fill="#000"/><path d="M10.2,9.5 L21.8,20.8 M22,9.5 L10.4,20.8" stroke="#2a2600" stroke-width="1.4"/><ellipse cx="16.1" cy="11.5" rx="4" ry="3" fill="#8a8300"/><ellipse cx="16.1" cy="20.5" rx="3.6" ry="2" fill="#eee300"/><path d="M5,21 L8,26 M27,21 L24,26" stroke="#000" stroke-width="2"/></svg>
<div class="a t" style="left:475.20px;top:1039.82px;font-family:'Liberation Sans', sans-serif;font-size:10.80px;font-weight:normal;color:#111;transform:scaleX(0.9483);transform-origin:0 0;-webkit-text-stroke:0.18px #111">PUBLIC LEARNING</div>
<div class="a t" style="left:475.20px;top:1052.02px;font-family:'Liberation Sans', sans-serif;font-size:10.80px;font-weight:normal;color:#111;transform:scaleX(0.9457);transform-origin:0 0;-webkit-text-stroke:0.18px #111">MANAGEMENT SYSTEM</div>
<div class="a t" style="left:475.20px;top:1065.72px;font-family:'Liberation Sans', sans-serif;font-size:6.80px;font-weight:normal;color:#1a1a1a;transform:scaleX(1.0519);transform-origin:0 0;-webkit-text-stroke:0.18px #1a1a1a">Balai Diklat Tambang Bawah Tanah</div>
<div class="a" style="left:1221.0px;top:1044.7px;width:51.0px;height:23.8px;background:#0d9af3;border-radius:4px"></div>
<svg class="a" style="left:1229.5px;top:1051.5px" width="10" height="10" viewBox="0 0 10 10"><circle cx="5" cy="3" r="2.3" fill="#fff"/><path d="M1,9.5 Q1,5.8 5,5.8 Q9,5.8 9,9.5 Z" fill="#fff"/></svg>
<div class="a t" style="left:1241.50px;top:1050.72px;font-family:'Liberation Sans', sans-serif;font-size:11.50px;font-weight:normal;color:#fff;transform:scaleX(1.0001);transform-origin:0 0;-webkit-text-stroke:0.18px #fff">User</div>
<div class="a t" style="left:463.60px;top:983.50px;font-family:'Liberation Sans', sans-serif;font-size:8.70px;font-weight:normal;color:#e0e0e0;transform:scaleX(0.9295);transform-origin:0 0;-webkit-text-stroke:0.18px #e0e0e0">Angkatan Diklat</div>
<div class="a t" style="left:493.70px;top:1010.98px;font-family:'Liberation Sans', sans-serif;font-size:9.20px;font-weight:normal;color:#e8e8e8;transform:scaleX(1.0761);transform-origin:0 0;-webkit-text-stroke:0.18px #e8e8e8">localhost:8000/settings/batch</div>
<div class="a t" style="left:1246.20px;top:1011.32px;font-family:'Liberation Sans', sans-serif;font-size:8.80px;font-weight:normal;color:#dcdcdc;transform:scaleX(1.0137);transform-origin:0 0;-webkit-text-stroke:0.18px #dcdcdc">Incognito</div>
<svg class="a" style="left:439.5px;top:1102.3px" width="9" height="8" viewBox="0 0 9 8"><path d="M4.5,0.3 L8.8,4 L7.6,4 L7.6,7.8 L1.4,7.8 L1.4,4 L0.2,4 Z" fill="#1877f2"/></svg>
<div class="a t" style="left:455.50px;top:1102.08px;font-family:'Liberation Sans', sans-serif;font-size:8.50px;font-weight:normal;color:#1877f2;transform:scaleX(1.0001);transform-origin:0 0;-webkit-text-stroke:0.18px #1877f2">/</div>
<div class="a t" style="left:463.30px;top:1101.39px;font-family:'Liberation Sans', sans-serif;font-size:9.30px;font-weight:normal;color:#1877f2;transform:scaleX(1.0918);transform-origin:0 0;-webkit-text-stroke:0.18px #1877f2">Pengaturan</div>
<div class="a t" style="left:522.00px;top:1102.08px;font-family:'Liberation Sans', sans-serif;font-size:8.50px;font-weight:normal;color:#1877f2;transform:scaleX(1.0001);transform-origin:0 0;-webkit-text-stroke:0.18px #1877f2">/</div>
<div class="a" style="left:539.4px;top:1105.3px;width:733.1px;height:1px;background:#dedede"></div>
<div class="a t" style="left:440.00px;top:1120.67px;font-family:'Liberation Sans', sans-serif;font-size:21.80px;font-weight:normal;color:#212529;transform:scaleX(0.9403);transform-origin:0 0;-webkit-text-stroke:0.18px #212529">Angkatan Diklat</div>
<div class="a" style="left:439.6px;top:1158.6px;width:68.4px;height:23.4px;background:#f5e53e;border-radius:3px"></div>
<div class="a t" style="left:448.30px;top:1165.50px;font-family:'Liberation Sans', sans-serif;font-size:10.00px;font-weight:normal;color:#1a1a1a;transform:scaleX(1.0176);transform-origin:0 0;-webkit-text-stroke:0.18px #1a1a1a">+ Angkatan</div>
<div class="a" style="left:1116.0px;top:1158.0px;width:123.5px;height:24px;background:#fbfbfb;border:1px solid #e3e3e3;border-radius:3px"></div>
<div class="a t" style="left:1124.00px;top:1165.33px;font-family:'Liberation Sans', sans-serif;font-size:10.20px;font-weight:normal;color:#2196f3;transform:scaleX(1.0001);transform-origin:0 0;-webkit-text-stroke:0.18px #2196f3">Cari</div>
<div class="a" style="left:1245.3px;top:1158.0px;width:27.2px;height:24px;border:1.2px solid #5aa37e;border-radius:3px"></div>
<svg class="a" style="left:1253.0px;top:1164.5px" width="12" height="12" viewBox="0 0 12 12"><circle cx="5" cy="5" r="3.6" stroke="#3a8a62" stroke-width="1.4" fill="none"/><path d="M7.6,7.6 L10.6,10.6" stroke="#3a8a62" stroke-width="1.6"/></svg>
<div class="a t" style="left:444.90px;top:1205.19px;font-family:'Liberation Sans', sans-serif;font-size:10.60px;font-weight:bold;color:#111;transform:scaleX(1.0001);transform-origin:0 0;-webkit-text-stroke:0.18px #111">#</div>
<div class="a t" style="left:479.30px;top:1205.19px;font-family:'Liberation Sans', sans-serif;font-size:10.60px;font-weight:bold;color:#111;transform:scaleX(0.9495);transform-origin:0 0;-webkit-text-stroke:0.18px #111">Nama</div>
<div class="a t" style="left:766.60px;top:1205.19px;font-family:'Liberation Sans', sans-serif;font-size:10.60px;font-weight:bold;color:#111;transform:scaleX(0.9693);transform-origin:0 0;-webkit-text-stroke:0.18px #111">Tgl. Mulai</div>
<div class="a t" style="left:984.30px;top:1205.19px;font-family:'Liberation Sans', sans-serif;font-size:10.60px;font-weight:bold;color:#111;transform:scaleX(0.9632);transform-origin:0 0;-webkit-text-stroke:0.18px #111">Tgl. Selesai</div>
<div class="a t" style="left:1195.90px;top:1205.19px;font-family:'Liberation Sans', sans-serif;font-size:10.60px;font-weight:bold;color:#111;transform:scaleX(0.9405);transform-origin:0 0;-webkit-text-stroke:0.18px #111">Aksi</div>
<div class="a" style="left:439.7px;top:1223.5px;width:832.3px;height:27.73px;background:#ebebeb;border-top:1px solid #e2e2e2"></div>
<div class="a t" style="left:444.90px;top:1232.16px;font-family:'Liberation Sans', sans-serif;font-size:10.40px;font-weight:bold;color:#222;transform:scaleX(1.0001);transform-origin:0 0;-webkit-text-stroke:0.18px #222">1</div>
<div class="a t" style="left:479.30px;top:1232.16px;font-family:'Liberation Sans', sans-serif;font-size:10.40px;font-weight:normal;color:#222;transform:scaleX(0.9819);transform-origin:0 0;-webkit-text-stroke:0.18px #222">UIN Bandung 2025</div>
<div class="a t" style="left:766.60px;top:1232.16px;font-family:'Liberation Sans', sans-serif;font-size:10.40px;font-weight:normal;color:#222;transform:scaleX(0.9794);transform-origin:0 0;-webkit-text-stroke:0.18px #222">19 Agustus 2025</div>
<div class="a t" style="left:984.30px;top:1232.16px;font-family:'Liberation Sans', sans-serif;font-size:10.40px;font-weight:normal;color:#222;transform:scaleX(0.9730);transform-origin:0 0;-webkit-text-stroke:0.18px #222">21 Agustus 2025</div>
<div class="a t" style="left:1195.90px;top:1232.96px;font-family:'Liberation Sans', sans-serif;font-size:10.40px;font-weight:normal;color:#2a6fdb;transform:scaleX(1.0055);transform-origin:0 0;text-decoration:underline;-webkit-text-stroke:0.18px #2a6fdb">Detail</div>
<div class="a" style="left:575px;top:1231.3px;width:26.4px;height:13px;background:#198754;border-radius:3px"></div>
<div class="a t" style="left:579.00px;top:1234.67px;font-family:'Liberation Sans', sans-serif;font-size:7.80px;font-weight:bold;color:#f2f2f2;transform:scaleX(1.0322);transform-origin:0 0;-webkit-text-stroke:0.18px #f2f2f2">Aktif</div>
<div class="a" style="left:439.7px;top:1251.2px;width:832.3px;height:27.73px;background:#f7f7f7;border-top:1px solid #e2e2e2"></div>
<div class="a t" style="left:444.90px;top:1259.89px;font-family:'Liberation Sans', sans-serif;font-size:10.40px;font-weight:bold;color:#222;transform:scaleX(1.0001);transform-origin:0 0;-webkit-text-stroke:0.18px #222">2</div>
<div class="a t" style="left:479.30px;top:1259.89px;font-family:'Liberation Sans', sans-serif;font-size:10.40px;font-weight:normal;color:#222;transform:scaleX(0.9819);transform-origin:0 0;-webkit-text-stroke:0.18px #222">UIN Bandung 2024</div>
<div class="a t" style="left:766.60px;top:1259.89px;font-family:'Liberation Sans', sans-serif;font-size:10.40px;font-weight:normal;color:#222;transform:scaleX(0.9817);transform-origin:0 0;-webkit-text-stroke:0.18px #222">29 Maret 2024</div>
<div class="a t" style="left:984.30px;top:1259.89px;font-family:'Liberation Sans', sans-serif;font-size:10.40px;font-weight:normal;color:#222;transform:scaleX(0.9663);transform-origin:0 0;-webkit-text-stroke:0.18px #222">1 April 2024</div>
<div class="a t" style="left:1195.90px;top:1260.69px;font-family:'Liberation Sans', sans-serif;font-size:10.40px;font-weight:normal;color:#2a6fdb;transform:scaleX(1.0055);transform-origin:0 0;text-decoration:underline;-webkit-text-stroke:0.18px #2a6fdb">Detail</div>
<div class="a" style="left:439.7px;top:1279.0px;width:832.3px;height:27.73px;background:#ebebeb;border-top:1px solid #e2e2e2"></div>
<div class="a t" style="left:444.90px;top:1287.62px;font-family:'Liberation Sans', sans-serif;font-size:10.40px;font-weight:bold;color:#222;transform:scaleX(1.0001);transform-origin:0 0;-webkit-text-stroke:0.18px #222">3</div>
<div class="a t" style="left:479.30px;top:1287.62px;font-family:'Liberation Sans', sans-serif;font-size:10.40px;font-weight:normal;color:#222;transform:scaleX(0.9859);transform-origin:0 0;-webkit-text-stroke:0.18px #222">Dikmas Sukabumi 2023</div>
<div class="a t" style="left:766.60px;top:1287.62px;font-family:'Liberation Sans', sans-serif;font-size:10.40px;font-weight:normal;color:#222;transform:scaleX(0.9794);transform-origin:0 0;-webkit-text-stroke:0.18px #222">29 Juni 2023</div>
<div class="a t" style="left:984.30px;top:1287.62px;font-family:'Liberation Sans', sans-serif;font-size:10.40px;font-weight:normal;color:#222;transform:scaleX(0.9776);transform-origin:0 0;-webkit-text-stroke:0.18px #222">04 Juli 2023</div>
<div class="a t" style="left:1195.90px;top:1288.42px;font-family:'Liberation Sans', sans-serif;font-size:10.40px;font-weight:normal;color:#2a6fdb;transform:scaleX(1.0055);transform-origin:0 0;text-decoration:underline;-webkit-text-stroke:0.18px #2a6fdb">Detail</div>
<div class="a" style="left:439.7px;top:1306.7px;width:832.3px;height:27.73px;background:#f7f7f7;border-top:1px solid #e2e2e2"></div>
<div class="a t" style="left:444.90px;top:1315.35px;font-family:'Liberation Sans', sans-serif;font-size:10.40px;font-weight:bold;color:#222;transform:scaleX(1.0001);transform-origin:0 0;-webkit-text-stroke:0.18px #222">3</div>
<div class="a t" style="left:479.30px;top:1315.35px;font-family:'Liberation Sans', sans-serif;font-size:10.40px;font-weight:normal;color:#222;transform:scaleX(0.9843);transform-origin:0 0;-webkit-text-stroke:0.18px #222">Dikmas Sawahlunto 2023</div>
<div class="a t" style="left:766.60px;top:1315.35px;font-family:'Liberation Sans', sans-serif;font-size:10.40px;font-weight:normal;color:#222;transform:scaleX(0.9847);transform-origin:0 0;-webkit-text-stroke:0.18px #222">29 Juli 2023</div>
<div class="a t" style="left:984.30px;top:1315.35px;font-family:'Liberation Sans', sans-serif;font-size:10.40px;font-weight:normal;color:#222;transform:scaleX(0.9730);transform-origin:0 0;-webkit-text-stroke:0.18px #222">04 Agustus 2023</div>
<div class="a t" style="left:1195.90px;top:1316.15px;font-family:'Liberation Sans', sans-serif;font-size:10.40px;font-weight:normal;color:#2a6fdb;transform:scaleX(1.0055);transform-origin:0 0;text-decoration:underline;-webkit-text-stroke:0.18px #2a6fdb">Detail</div>
<div class="a" style="left:439.7px;top:1334.4px;width:832.3px;height:27.73px;background:#ebebeb;border-top:1px solid #e2e2e2"></div>
<div class="a t" style="left:444.90px;top:1343.08px;font-family:'Liberation Sans', sans-serif;font-size:10.40px;font-weight:bold;color:#222;transform:scaleX(1.0001);transform-origin:0 0;-webkit-text-stroke:0.18px #222">5</div>
<div class="a t" style="left:479.30px;top:1343.08px;font-family:'Liberation Sans', sans-serif;font-size:10.40px;font-weight:normal;color:#222;transform:scaleX(0.9841);transform-origin:0 0;-webkit-text-stroke:0.18px #222">Universitas Jambi 2023</div>
<div class="a t" style="left:766.60px;top:1343.08px;font-family:'Liberation Sans', sans-serif;font-size:10.40px;font-weight:normal;color:#222;transform:scaleX(0.9848);transform-origin:0 0;-webkit-text-stroke:0.18px #222">29 September 2023</div>
<div class="a t" style="left:984.30px;top:1343.08px;font-family:'Liberation Sans', sans-serif;font-size:10.40px;font-weight:normal;color:#222;transform:scaleX(0.9803);transform-origin:0 0;-webkit-text-stroke:0.18px #222">04 Oktober 2023</div>
<div class="a t" style="left:1195.90px;top:1343.88px;font-family:'Liberation Sans', sans-serif;font-size:10.40px;font-weight:normal;color:#2a6fdb;transform:scaleX(1.0055);transform-origin:0 0;text-decoration:underline;-webkit-text-stroke:0.18px #2a6fdb">Detail</div>
<div class="a" style="left:439.7px;top:1362.2px;width:832.3px;height:27.73px;background:#f7f7f7;border-top:1px solid #e2e2e2"></div>
<div class="a t" style="left:444.90px;top:1370.81px;font-family:'Liberation Sans', sans-serif;font-size:10.40px;font-weight:bold;color:#222;transform:scaleX(1.0001);transform-origin:0 0;-webkit-text-stroke:0.18px #222">6</div>
<div class="a t" style="left:479.30px;top:1370.81px;font-family:'Liberation Sans', sans-serif;font-size:10.40px;font-weight:normal;color:#222;transform:scaleX(0.9856);transform-origin:0 0;-webkit-text-stroke:0.18px #222">Universitas Riau 2023</div>
<div class="a t" style="left:766.60px;top:1370.81px;font-family:'Liberation Sans', sans-serif;font-size:10.40px;font-weight:normal;color:#222;transform:scaleX(0.9865);transform-origin:0 0;-webkit-text-stroke:0.18px #222">29 November 2023</div>
<div class="a t" style="left:984.30px;top:1370.81px;font-family:'Liberation Sans', sans-serif;font-size:10.40px;font-weight:normal;color:#222;transform:scaleX(0.9797);transform-origin:0 0;-webkit-text-stroke:0.18px #222">04 Desember 2023</div>
<div class="a t" style="left:1195.90px;top:1371.61px;font-family:'Liberation Sans', sans-serif;font-size:10.40px;font-weight:normal;color:#2a6fdb;transform:scaleX(1.0055);transform-origin:0 0;text-decoration:underline;-webkit-text-stroke:0.18px #2a6fdb">Detail</div>
<div class="a" style="left:439.7px;top:1389.9px;width:832.3px;height:1px;background:#e2e2e2"></div>
<div class="a t" style="left:634.70px;top:1559.61px;font-family:'Liberation Serif', serif;font-size:23.00px;font-weight:normal;color:#595959;transform:scaleX(0.9741);transform-origin:0 0;-webkit-text-stroke:0.4px #595959">Gambar 18: Halaman pengaturan Angkatan Diklat</div>
<div class="a t" style="left:1330.94px;top:1643.08px;font-family:'Liberation Serif', serif;font-size:24.00px;font-weight:normal;color:#000;transform:scaleX(1.0636);transform-origin:0 0;-webkit-text-stroke:0.2px #000">31</div>
<div class="a t" style="left:1521.13px;top:266.45px;font-family:'Liberation Serif', serif;font-size:25.00px;font-weight:bold;color:#000;transform:scaleX(0.9660);transform-origin:0 0;-webkit-text-stroke:0.25px #000">2.1.3.4  Membuat Modul Course (Mata Diklat) &amp; Content (Materi)</div>
<div class="a" style="left:1520.7px;top:324.8px;width:992.3px;height:2.3px;background:#111"></div>
<div class="a" style="left:1520.7px;top:1625.7px;width:992.3px;height:2.3px;background:#111"></div>
<div class="a" style="left:1520.7px;top:324.8px;width:2.3px;height:1303.2px;background:#111"></div>
<div class="a" style="left:2510.7px;top:324.8px;width:2.3px;height:1303.2px;background:#111"></div>
<div class="a" style="left:1520.7px;top:372.6px;width:992.3px;height:2.3px;background:#111"></div>
<div class="a" style="left:1520.7px;top:489.2px;width:992.3px;height:2.3px;background:#111"></div>
<div class="a" style="left:1520.7px;top:537.8px;width:992.3px;height:2.3px;background:#111"></div>
<div class="a" style="left:1520.7px;top:642.8px;width:992.3px;height:2.3px;background:#111"></div>
<div class="a" style="left:1520.7px;top:690.8px;width:992.3px;height:2.3px;background:#111"></div>
<div class="a" style="left:1698.6px;top:324.8px;width:2.3px;height:367.2px;background:#111"></div>
<div class="a t" style="left:1532.40px;top:338.81px;font-family:'Liberation Serif', serif;font-size:24.20px;font-weight:normal;color:#000;transform:scaleX(0.9793);transform-origin:0 0;-webkit-text-stroke:0.45px #000">Kegiatan</div>
<div class="a t" style="left:1710.70px;top:338.81px;font-family:'Liberation Serif', serif;font-size:24.20px;font-weight:normal;color:#000;transform:scaleX(0.9867);transform-origin:0 0;-webkit-text-stroke:0.45px #000">Membuat Modul Course &amp; Content</div>
<div class="a t" style="left:1531.41px;top:388.91px;font-family:'Liberation Serif', serif;font-size:24.20px;font-weight:normal;color:#000;transform:scaleX(0.9916);transform-origin:0 0;-webkit-text-stroke:0.45px #000">Sub-Kegiatan</div>
<div class="a t" style="left:1716.00px;top:388.91px;font-family:'Liberation Serif', serif;font-size:24.20px;font-weight:normal;color:#000;transform:scaleX(1.0001);transform-origin:0 0;-webkit-text-stroke:0.45px #000">-</div>
<div class="a t" style="left:1716.00px;top:418.91px;font-family:'Liberation Serif', serif;font-size:24.20px;font-weight:normal;color:#000;transform:scaleX(1.0001);transform-origin:0 0;-webkit-text-stroke:0.45px #000">-</div>
<div class="a t" style="left:1716.00px;top:450.61px;font-family:'Liberation Serif', serif;font-size:24.20px;font-weight:normal;color:#000;transform:scaleX(1.0001);transform-origin:0 0;-webkit-text-stroke:0.45px #000">-</div>
<div class="a t" style="left:1751.00px;top:388.91px;font-family:'Liberation Serif', serif;font-size:24.20px;font-weight:normal;color:#000;transform:scaleX(0.9908);transform-origin:0 0;-webkit-text-stroke:0.45px #000">Membuat CRUD topik diklat (course)</div>
<div class="a t" style="left:1751.00px;top:418.91px;font-family:'Liberation Serif', serif;font-size:24.20px;font-weight:normal;color:#000;transform:scaleX(1.0190);transform-origin:0 0;-webkit-text-stroke:0.45px #000">Membuat Upload/kelola media pembelajaran (file, video, teks)</div>
<div class="a t" style="left:1751.00px;top:450.61px;font-family:'Liberation Serif', serif;font-size:24.20px;font-weight:normal;color:#000;transform:scaleX(1.0273);transform-origin:0 0;-webkit-text-stroke:0.45px #000">Membuat fitur membuka media pembelajaran</div>
<div class="a t" style="left:1532.40px;top:504.31px;font-family:'Liberation Serif', serif;font-size:24.20px;font-weight:normal;color:#000;transform:scaleX(1.0106);transform-origin:0 0;-webkit-text-stroke:0.45px #000">Waktu</div>
<div class="a t" style="left:1710.70px;top:504.31px;font-family:'Liberation Serif', serif;font-size:24.20px;font-weight:normal;color:#000;transform:scaleX(1.0189);transform-origin:0 0;-webkit-text-stroke:0.45px #000">08 Oktober 2025 -13 Oktober 2025</div>
<div class="a t" style="left:1532.40px;top:553.91px;font-family:'Liberation Serif', serif;font-size:24.20px;font-weight:normal;color:#000;transform:scaleX(1.0271);transform-origin:0 0;-webkit-text-stroke:0.45px #000">Output</div>
<div class="a t" style="left:1743.90px;top:553.91px;font-family:'Liberation Serif', serif;font-size:24.20px;font-weight:normal;color:#000;transform:scaleX(1.0001);transform-origin:0 0;-webkit-text-stroke:0.45px #000">1.</div>
<div class="a t" style="left:1744.90px;top:580.81px;font-family:'Liberation Serif', serif;font-size:24.20px;font-weight:normal;color:#000;transform:scaleX(1.0001);transform-origin:0 0;-webkit-text-stroke:0.45px #000">2.</div>
<div class="a t" style="left:1744.90px;top:608.71px;font-family:'Liberation Serif', serif;font-size:24.20px;font-weight:normal;color:#000;transform:scaleX(1.0001);transform-origin:0 0;-webkit-text-stroke:0.45px #000">3.</div>
<div class="a t" style="left:1780.00px;top:553.91px;font-family:'Liberation Serif', serif;font-size:24.20px;font-weight:normal;color:#000;transform:scaleX(1.0349);transform-origin:0 0;-webkit-text-stroke:0.45px #000">Tersedianya halaman tampilan daftar mata diklat (course)</div>
<div class="a t" style="left:1780.00px;top:580.81px;font-family:'Liberation Serif', serif;font-size:24.20px;font-weight:normal;color:#000;transform:scaleX(1.0335);transform-origin:0 0;-webkit-text-stroke:0.45px #000">Tersedianya halaman tampilan daftar media pembelajaran</div>
<div class="a t" style="left:1780.00px;top:608.71px;font-family:'Liberation Serif', serif;font-size:24.20px;font-weight:normal;color:#000;transform:scaleX(1.0316);transform-origin:0 0;-webkit-text-stroke:0.45px #000">Tersedia fitur untuk membaca media pembelajaran</div>
<div class="a t" style="left:1532.40px;top:658.21px;font-family:'Liberation Serif', serif;font-size:24.20px;font-weight:normal;color:#000;transform:scaleX(1.0197);transform-origin:0 0;-webkit-text-stroke:0.45px #000">Pencapaian</div>
<div class="a t" style="left:1710.70px;top:658.21px;font-family:'Liberation Serif', serif;font-size:24.20px;font-weight:normal;color:#000;transform:scaleX(1.0177);transform-origin:0 0;-webkit-text-stroke:0.45px #000">Tercapai 100%</div>
<div class="a t" style="left:1532.40px;top:705.81px;font-family:'Liberation Serif', serif;font-size:24.20px;font-weight:normal;color:#000;transform:scaleX(0.9911);transform-origin:0 0;-webkit-text-stroke:0.45px #000">Bukti Aktualisasi:</div>
<div class="a" style="left:1557.0px;top:742.0px;width:922.0px;height:574.0px;background:#f3f3f3;overflow:hidden"></div>
<div class="a" style="left:1557.0px;top:742.0px;width:922.0px;height:32px;background:#202121"></div>
<svg class="a" style="left:1601.0px;top:742.0px" width="170" height="27" viewBox="0 0 170 27"><path d="M0,26.5 Q6,26.5 6,20.5 V10 Q6,4 12,4 H149.3 Q155.3,4 155.3,10 V20.5 Q155.3,26.5 161.3,26.5 Z" fill="#3b3b3b"/></svg>
<div class="a" style="left:1557.0px;top:768.0px;width:922.0px;height:29px;background:#3b3b3b;border-radius:6px 0 0 0"></div>
<svg class="a" style="left:1557.0px;top:742.0px" width="922.0" height="56" viewBox="0 0 922.0 56"><circle cx="12.4" cy="12.9" r="4.2" fill="#fe5f57"/><circle cx="25.3" cy="12.9" r="4.2" fill="#3e3e3e"/><circle cx="38.1" cy="12.9" r="4.2" fill="#2ac840"/><circle cx="60.5" cy="14.2" r="4.3" fill="#5f636b"/><path d="M57.5,12 q2,1 3,-1 q2,2 4,0.5 M58,16.5 q2,-1.5 3.5,0.5 q1,1.2 2.5,0" stroke="#8a8e96" stroke-width="0.9" fill="none"/><path d="M185.8,10.4 L191,15.6 M191,10.4 L185.8,15.6" stroke="#d8d8d8" stroke-width="1.3"/><path d="M211.7,8.8 V16.8 M207.7,12.8 H215.7" stroke="#d8d8d8" stroke-width="1.3"/><rect x="896.0" y="4" width="21" height="18" rx="5" fill="#343434"/><path d="M903.9,11.8 l2.6,2.6 l2.6,-2.6" stroke="#d0d0d0" stroke-width="1.2" fill="none"/><circle cx="917.5" cy="5.2" r="2" fill="#6b5cf6"/><path d="M19,40.6 H10 M13.6,36.8 L9.8,40.6 L13.6,44.4" stroke="#c8c8c8" stroke-width="1.3" fill="none"/><path d="M32.6,40.6 H41.6 M38,36.8 L41.8,40.6 L38,44.4" stroke="#858585" stroke-width="1.3" fill="none"/><path d="M63.6,38.2 A4,4 0 1 0 64.2,42" stroke="#c8c8c8" stroke-width="1.3" fill="none"/><path d="M61.6,36 L64.4,36.2 L64.2,39" stroke="#c8c8c8" stroke-width="1.3" fill="none"/><rect x="77.9" y="30.2" width="742.1" height="20.8" rx="10.4" fill="#282828"/><circle cx="88" cy="40.6" r="7" fill="#3a3a3a"/><circle cx="88" cy="40.6" r="4.2" stroke="#d0d0d0" stroke-width="1" fill="none"/><path d="M88,39.6 V42.6" stroke="#d0d0d0" stroke-width="1"/><path d="M804.8,35.8 l1.4,3 3.2,0.3 -2.4,2.1 0.7,3.2 -2.9,-1.7 -2.9,1.7 0.7,-3.2 -2.4,-2.1 3.2,-0.3 z" stroke="#d0d0d0" stroke-width="1.1" fill="none"/><rect x="826.0" y="30.2" width="67" height="20.8" rx="10.4" fill="#282828"/><path d="M834.1,39 h9 M835.1,39 l1,-3.5 h5 l1,3.5" stroke="#d0d0d0" stroke-width="1.1" fill="none"/><circle cx="836.3" cy="43" r="1.8" stroke="#d0d0d0" stroke-width="1" fill="none"/><circle cx="840.9" cy="43" r="1.8" stroke="#d0d0d0" stroke-width="1" fill="none"/><circle cx="907.3" cy="36.6" r="1.1" fill="#d0d0d0"/><circle cx="907.3" cy="40.6" r="1.1" fill="#d0d0d0"/><circle cx="907.3" cy="44.6" r="1.1" fill="#d0d0d0"/></svg>
<div class="a" style="left:1557.0px;top:797.0px;width:922.0px;height:52px;background:#cebc06"></div>
<svg class="a" style="left:1602.5px;top:808.0px" width="32" height="31" viewBox="0 0 32 31"><path d="M16.1,1.8 L30.8,11.8 L25.2,28.4 L6.8,28.4 L1.4,11.8 Z" fill="#2a2700" stroke="#050500" stroke-width="2.2" stroke-linejoin="round"/><circle cx="16.1" cy="14.8" r="9.3" fill="#eee300"/><path d="M7.5,22 Q16,30 24.7,22 L24,19.5 Q16,24 8.2,19.5 Z" fill="#4a4500"/><path d="M9.3,8.6 Q16.1,5.2 22.9,8.6" stroke="#000" stroke-width="1.8" fill="none"/><rect x="15.2" y="1.8" width="1.8" height="4.6" fill="#000"/><path d="M10.2,9.5 L21.8,20.8 M22,9.5 L10.4,20.8" stroke="#2a2600" stroke-width="1.4"/><ellipse cx="16.1" cy="11.5" rx="4" ry="3" fill="#8a8300"/><ellipse cx="16.1" cy="20.5" rx="3.6" ry="2" fill="#eee300"/><path d="M5,21 L8,26 M27,21 L24,26" stroke="#000" stroke-width="2"/></svg>
<div class="a t" style="left:1639.20px;top:806.82px;font-family:'Liberation Sans', sans-serif;font-size:10.80px;font-weight:normal;color:#111;transform:scaleX(0.9483);transform-origin:0 0;-webkit-text-stroke:0.18px #111">PUBLIC LEARNING</div>
<div class="a t" style="left:1639.20px;top:819.02px;font-family:'Liberation Sans', sans-serif;font-size:10.80px;font-weight:normal;color:#111;transform:scaleX(0.9457);transform-origin:0 0;-webkit-text-stroke:0.18px #111">MANAGEMENT SYSTEM</div>
<div class="a t" style="left:1639.20px;top:832.72px;font-family:'Liberation Sans', sans-serif;font-size:6.80px;font-weight:normal;color:#1a1a1a;transform:scaleX(1.0519);transform-origin:0 0;-webkit-text-stroke:0.18px #1a1a1a">Balai Diklat Tambang Bawah Tanah</div>
<div class="a" style="left:2374.0px;top:811.7px;width:58.0px;height:23.8px;background:#0d9af3;border-radius:4px"></div>
<svg class="a" style="left:2382.5px;top:818.5px" width="10" height="10" viewBox="0 0 10 10"><circle cx="5" cy="3" r="2.3" fill="#fff"/><path d="M1,9.5 Q1,5.8 5,5.8 Q9,5.8 9,9.5 Z" fill="#fff"/></svg>
<div class="a t" style="left:2394.50px;top:817.73px;font-family:'Liberation Sans', sans-serif;font-size:11.50px;font-weight:normal;color:#fff;transform:scaleX(1.0001);transform-origin:0 0;-webkit-text-stroke:0.18px #fff">Admin</div>
<div class="a t" style="left:1627.60px;top:750.50px;font-family:'Liberation Sans', sans-serif;font-size:8.70px;font-weight:normal;color:#e0e0e0;transform:scaleX(0.8877);transform-origin:0 0;-webkit-text-stroke:0.18px #e0e0e0">Courses</div>
<div class="a t" style="left:1657.70px;top:777.98px;font-family:'Liberation Sans', sans-serif;font-size:9.20px;font-weight:normal;color:#e8e8e8;transform:scaleX(1.0489);transform-origin:0 0;-webkit-text-stroke:0.18px #e8e8e8">localhost:8000/courses</div>
<div class="a t" style="left:2406.20px;top:778.32px;font-family:'Liberation Sans', sans-serif;font-size:8.80px;font-weight:normal;color:#dcdcdc;transform:scaleX(1.0137);transform-origin:0 0;-webkit-text-stroke:0.18px #dcdcdc">Incognito</div>
<svg class="a" style="left:1603.0px;top:868.8px" width="9" height="8" viewBox="0 0 9 8"><path d="M4.5,0.3 L8.8,4 L7.6,4 L7.6,7.8 L1.4,7.8 L1.4,4 L0.2,4 Z" fill="#1877f2"/></svg>
<div class="a t" style="left:1618.50px;top:868.57px;font-family:'Liberation Sans', sans-serif;font-size:8.50px;font-weight:normal;color:#1877f2;transform:scaleX(1.0001);transform-origin:0 0;-webkit-text-stroke:0.18px #1877f2">/</div>
<div class="a t" style="left:1626.20px;top:867.89px;font-family:'Liberation Sans', sans-serif;font-size:9.30px;font-weight:normal;color:#1877f2;transform:scaleX(1.0763);transform-origin:0 0;-webkit-text-stroke:0.18px #1877f2">Diklat Saya</div>
<div class="a t" style="left:1684.50px;top:868.57px;font-family:'Liberation Sans', sans-serif;font-size:8.50px;font-weight:normal;color:#1877f2;transform:scaleX(1.0001);transform-origin:0 0;-webkit-text-stroke:0.18px #1877f2">/</div>
<div class="a" style="left:1702.0px;top:872.0px;width:730.5px;height:1px;background:#dcdcdc"></div>
<div class="a t" style="left:1602.48px;top:887.60px;font-family:'Liberation Sans', sans-serif;font-size:20.00px;font-weight:normal;color:#212529;transform:scaleX(1.0219);transform-origin:0 0;-webkit-text-stroke:0.18px #212529">UIN Bandung 2025</div>
<div class="a" style="left:1603.0px;top:925.8px;width:265.4px;height:252.2px;background:#f5f5f5;border:1px solid #dcdcdc;border-radius:4px"></div>
<div class="a" style="left:1603.0px;top:925.3px;width:265.4px;height:123.5px;border-radius:4px 4px 0 0;overflow:hidden"><svg width="265.4" height="123.5" viewBox="0 0 266 122" preserveAspectRatio="none" style="display:block"><defs><filter id="g4"><feGaussianBlur stdDeviation="2"/></filter><filter id="g4s"><feGaussianBlur stdDeviation="0.5"/></filter><radialGradient id="g4r"><stop offset="0" stop-color="#ffffff"/><stop offset="0.5" stop-color="#fffdf6"/><stop offset="0.72" stop-color="#f0dcc0" stop-opacity="0.75"/><stop offset="1" stop-color="#3a332b" stop-opacity="0"/></radialGradient></defs><rect width="266" height="122" fill="#3b342c"/><g filter="url(#g4)"><path d="M22,22 Q32,8 42,14 L56,38 Q70,62 68,80 Q64,90 58,86 L48,66 L38,50 Q26,38 22,22 Z" fill="#b27150"/><path d="M26,46 Q42,60 52,82 Q48,92 40,88 Q30,72 24,56 Z" fill="#96583a"/><path d="M34,48 Q45,52 52,66" stroke="#5a3020" stroke-width="2" fill="none"/><path d="M72,10 Q100,6 125,12 Q142,22 140,45 Q130,62 112,64 L90,70 Q76,62 74,40 Z" fill="#c07c58"/><path d="M74,22 Q84,15 92,30 Q88,38 80,34 Z" fill="#9a5a3a"/><path d="M74,58 Q100,58 126,70 L120,76 L80,76 Z" fill="#c8886a"/><path d="M20,85 L60,96 L40,105 Z" fill="#2a241e"/></g><circle cx="150" cy="66" r="58" fill="url(#g4r)"/><g stroke="#fff6e6" stroke-width="1.2" filter="url(#g4s)"><path d="M150,66 L186,12 M150,66 L206,30 M150,66 L214,56 M150,66 L218,84 M150,66 L205,100 M150,66 L184,118 M150,66 L142,120 M150,66 L106,84 M150,66 L108,30 M150,66 L128,12 M150,66 L162,18 M150,66 L214,72 M150,66 L118,100 M150,66 L196,42 M150,66 L98,66 M150,66 L170,116 M150,66 L126,112 M150,66 L200,112"/></g><ellipse cx="150" cy="68" rx="30" ry="26" fill="#fff"/></svg></div>
<div class="a t" style="left:1612.95px;top:1061.03px;font-family:'Liberation Sans', sans-serif;font-size:16.20px;font-weight:bold;color:#6b6414;transform:scaleX(0.9536);transform-origin:0 0;-webkit-text-stroke:0.18px #6b6414">Pengeboran dan Peledakan</div>
<div class="a t" style="left:1613.90px;top:1085.00px;font-family:'Liberation Sans', sans-serif;font-size:10.00px;font-weight:normal;color:#1e1e1e;transform:scaleX(1.0231);transform-origin:0 0;-webkit-text-stroke:0.18px #1e1e1e">Ir. Khaidir Ismed, S.T.1.2.</div>
<div class="a t" style="left:1613.90px;top:1109.59px;font-family:'Liberation Sans', sans-serif;font-size:9.90px;font-weight:normal;color:#222;transform:scaleX(1.0385);transform-origin:0 0;-webkit-text-stroke:0.15px #222">Metode-metode pengeboran, Peralatan pengeboran,</div>
<div class="a t" style="left:1613.90px;top:1124.38px;font-family:'Liberation Sans', sans-serif;font-size:9.90px;font-weight:normal;color:#222;transform:scaleX(1.0368);transform-origin:0 0;-webkit-text-stroke:0.15px #222">Pengoperasian bor jackleg, dan keselamatan dalam</div>
<div class="a t" style="left:1613.90px;top:1139.88px;font-family:'Liberation Sans', sans-serif;font-size:9.90px;font-weight:normal;color:#222;transform:scaleX(1.0389);transform-origin:0 0;-webkit-text-stroke:0.15px #222">proses pengeboran. 20 JP.</div>
<div class="a" style="left:1884.6px;top:925.8px;width:265.9px;height:252.2px;background:#f5f5f5;border:1px solid #dcdcdc;border-radius:4px"></div>
<div class="a" style="left:1884.6px;top:925.3px;width:265.9px;height:123.5px;border-radius:4px 4px 0 0;overflow:hidden"><svg width="265.9" height="123.5" viewBox="0 0 266 122" preserveAspectRatio="none" style="display:block"><defs><filter id="g5"><feGaussianBlur stdDeviation="1.2"/></filter><linearGradient id="g5w" x1="0" y1="0" x2="1" y2="1"><stop offset="0" stop-color="#d2aa90"/><stop offset="0.6" stop-color="#b88660"/><stop offset="1" stop-color="#9a6038"/></linearGradient></defs><rect width="266" height="122" fill="#5a5553"/><g filter="url(#g5)"><path d="M8,20 L266,8 L266,122 L38,122 L22,70 Z" fill="url(#g5w)"/><path d="M58,4 L250,2 Q262,12 254,24 L175,50 Q130,56 90,53 Q62,42 58,4 Z" fill="#c98a62"/><path d="M88,52 L176,38 L178,58 L112,64 Z" fill="#8e4c2a"/><path d="M150,24 Q165,30 178,26" stroke="#a86a48" stroke-width="2" fill="none"/><path d="M14,12 L72,8 L72,20 L14,22 Z" fill="#e0ccc4"/><rect x="24" y="22" width="10" height="15" fill="#4a3a30"/><rect x="186" y="0" width="30" height="58" fill="#1b1b1b"/><ellipse cx="200.6" cy="71" rx="45" ry="18.5" fill="#4a4a4a"/><ellipse cx="201" cy="63" rx="16" ry="8" fill="#2a2a2a"/><ellipse cx="200.6" cy="71" rx="39" ry="14.5" stroke="#666" stroke-width="1" fill="none"/><circle cx="176" cy="72" r="2" fill="#aaa"/><circle cx="225" cy="66" r="2" fill="#aaa"/><ellipse cx="90.5" cy="69" rx="16" ry="13" stroke="#a88a60" stroke-width="4" fill="#5a4030"/><path d="M90,78 L112,122 M102,78 L150,122" stroke="#ece4e0" stroke-width="4"/><path d="M110,88 L138,86" stroke="#3a3a3a" stroke-width="2"/><rect x="255" y="48" width="11" height="42" fill="#b07850"/><path d="M40,90 L266,100 M45,105 L266,114" stroke="#a87858" stroke-width="1" opacity="0.6"/></g></svg></div>
<div class="a t" style="left:1894.54px;top:1061.53px;font-family:'Liberation Sans', sans-serif;font-size:16.20px;font-weight:bold;color:#6b6414;transform:scaleX(0.9567);transform-origin:0 0;-webkit-text-stroke:0.18px #6b6414">Penyanggaan Terowongan</div>
<div class="a t" style="left:1895.50px;top:1085.20px;font-family:'Liberation Sans', sans-serif;font-size:10.00px;font-weight:normal;color:#1e1e1e;transform:scaleX(1.0251);transform-origin:0 0;-webkit-text-stroke:0.18px #1e1e1e">Ir. Tego Lenggono, S.T., M.Eng.</div>
<div class="a t" style="left:1895.50px;top:1109.09px;font-family:'Liberation Sans', sans-serif;font-size:9.90px;font-weight:normal;color:#222;transform:scaleX(1.0384);transform-origin:0 0;-webkit-text-stroke:0.15px #222">Jenis-jenis penyangga, perencanaan dan pemilihan</div>
<div class="a t" style="left:1895.50px;top:1124.49px;font-family:'Liberation Sans', sans-serif;font-size:9.90px;font-weight:normal;color:#222;transform:scaleX(1.0339);transform-origin:0 0;-webkit-text-stroke:0.15px #222">penyangga, konstruksi dan pemasangan, serta</div>
<div class="a t" style="left:1895.50px;top:1139.88px;font-family:'Liberation Sans', sans-serif;font-size:9.90px;font-weight:normal;color:#222;transform:scaleX(1.0396);transform-origin:0 0;-webkit-text-stroke:0.15px #222">evaluasi keselamatan penyangga. 10 JP.</div>
<div class="a" style="left:2166.7px;top:925.8px;width:265.7px;height:252.2px;background:#f5f5f5;border:1px solid #dcdcdc;border-radius:4px"></div>
<div class="a" style="left:2166.7px;top:925.3px;width:265.7px;height:123.5px;border-radius:4px 4px 0 0;overflow:hidden"><svg width="265.7" height="123.5" viewBox="0 0 266 122" preserveAspectRatio="none" style="display:block"><defs><filter id="g6" x="-20%" y="-20%" width="140%" height="140%"><feGaussianBlur stdDeviation="1.1"/></filter><filter id="g6b" x="-20%" y="-20%" width="140%" height="140%"><feGaussianBlur stdDeviation="0.5"/></filter></defs><rect width="266" height="122" fill="#242424"/><g filter="url(#g6)"><polygon points="104.5,36 108,31 117,28.5 128,28 140,31 149,34.5 150,45 147,60 144,70 137,78.5 128,81 120,74 111,65 106,50" fill="#efefef"/><path d="M156.7,23.2 L172.1,2.2" stroke="#9a9a9a" stroke-width="2.2"/><path d="M186.5,18.2 L197.5,13.8" stroke="#b8b8b8" stroke-width="1.8"/><path d="M149,33 L153,31" stroke="#bbb" stroke-width="2"/><polygon points="103,62 112,67 120,76 125,84 110,84 100,74" fill="#2c2c2c"/><path d="M147,36 L150,60 L144,74" stroke="#3a3a3a" stroke-width="2.5" fill="none"/></g><g fill="#161616" filter="url(#g6b)"><circle cx="119.7" cy="42.2" r="2.3"/><path d="M115,47 Q119.7,44 124.5,47 L124,60 L122,71 L117.5,71 L115.8,60 Z"/><circle cx="126.2" cy="45.6" r="2.1"/><path d="M122.2,49.5 Q126.2,47.4 130.4,49.5 L130.5,62 L128.6,76 L124.6,76 L123,62 Z"/><circle cx="139" cy="44" r="2.2"/><path d="M134.8,48 Q139,45.8 143.3,48 L143,62 L141.4,77 L137.2,77 L135.6,62 Z"/></g></svg></div>
<div class="a t" style="left:2177.60px;top:1061.53px;font-family:'Liberation Sans', sans-serif;font-size:16.20px;font-weight:bold;color:#6b6414;transform:scaleX(0.9461);transform-origin:0 0;-webkit-text-stroke:0.18px #6b6414">Search and Rescue</div>
<div class="a t" style="left:2177.60px;top:1085.20px;font-family:'Liberation Sans', sans-serif;font-size:10.00px;font-weight:normal;color:#1e1e1e;transform:scaleX(1.0239);transform-origin:0 0;-webkit-text-stroke:0.18px #1e1e1e">ir. Redi, S.T.</div>
<div class="a t" style="left:2177.60px;top:1109.09px;font-family:'Liberation Sans', sans-serif;font-size:9.90px;font-weight:normal;color:#222;transform:scaleX(1.0336);transform-origin:0 0;-webkit-text-stroke:0.15px #222">Perencanaan penyelamatan, penggunaan APD</div>
<div class="a t" style="left:2177.60px;top:1124.49px;font-family:'Liberation Sans', sans-serif;font-size:9.90px;font-weight:normal;color:#222;transform:scaleX(1.0317);transform-origin:0 0;-webkit-text-stroke:0.15px #222">lengkap, pelatihan berkala, penerapan prosedur</div>
<div class="a t" style="left:2177.60px;top:1139.88px;font-family:'Liberation Sans', sans-serif;font-size:9.90px;font-weight:normal;color:#222;transform:scaleX(1.0371);transform-origin:0 0;-webkit-text-stroke:0.15px #222">keselamatan ketat seperti izin kerja dan inspeksi rutin</div>
<div class="a t" style="left:2177.60px;top:1155.29px;font-family:'Liberation Sans', sans-serif;font-size:9.90px;font-weight:normal;color:#222;transform:scaleX(1.0468);transform-origin:0 0;-webkit-text-stroke:0.15px #222">peralatan.</div>
<div class="a" style="left:1603.2px;top:1194.3px;width:265.4px;height:121.5px;border:1px solid #dcdcdc;border-bottom:none;border-radius:4px 4px 0 0;overflow:hidden"><svg width="263.4" height="121.5" viewBox="0 0 266 122" preserveAspectRatio="none" style="display:block"><defs><filter id="g7" x="-30%" y="-30%" width="160%" height="160%"><feGaussianBlur stdDeviation="7"/></filter><filter id="g7s"><feGaussianBlur stdDeviation="0.8"/></filter><linearGradient id="g7g" x1="0" y1="0" x2="1" y2="0.3"><stop offset="0" stop-color="#b0c6cc"/><stop offset="0.5" stop-color="#8aa0ac"/><stop offset="0.8" stop-color="#707888"/><stop offset="1" stop-color="#404660"/></linearGradient></defs><rect width="266" height="122" fill="url(#g7g)"/><g filter="url(#g7)"><ellipse cx="58" cy="26" rx="60" ry="34" fill="#f6f6f6"/><ellipse cx="20" cy="12" rx="14" ry="11" fill="#6a6a40"/><ellipse cx="215" cy="18" rx="45" ry="24" fill="#c8d0d4"/><ellipse cx="165" cy="24" rx="30" ry="18" fill="#c4c49a"/><ellipse cx="107" cy="38" rx="12" ry="17" fill="#143868"/><ellipse cx="128" cy="46" rx="14" ry="10" fill="#8a6a7a"/><ellipse cx="50" cy="88" rx="52" ry="26" fill="#a2bac2"/><ellipse cx="250" cy="105" rx="32" ry="38" fill="#262638"/><ellipse cx="200" cy="72" rx="20" ry="30" fill="#5a6070"/></g><g filter="url(#g7s)"><path d="M120,88 Q128,64 145,52 Q162,42 172,22" stroke="#dfe6ea" stroke-width="1.3" fill="none" opacity="0.5"/><path d="M132,88 Q140,66 158,54 Q174,44 182,26" stroke="#dfe6ea" stroke-width="1" fill="none" opacity="0.4"/><path d="M78,122 L80,98 L208,86 L210,122 Z" fill="#5e6c7c"/><ellipse cx="141" cy="92" rx="66" ry="8" transform="rotate(-5 141 92)" stroke="#e8eef2" stroke-width="2.8" fill="#56667a"/></g></svg></div>
<div class="a" style="left:1557.0px;top:1302.6px;width:133.4px;height:13.2px;background:#202121;border-radius:0 4px 0 0"></div>
<div class="a t" style="left:1560.00px;top:1306.68px;font-family:'Liberation Sans', sans-serif;font-size:7.20px;font-weight:normal;color:#e0e0e0;transform:scaleX(1.1686);transform-origin:0 0;-webkit-text-stroke:0.18px #e0e0e0">localhost:8000/courses/detail.html</div>
<div class="a t" style="left:1625.20px;top:1327.91px;font-family:'Liberation Serif', serif;font-size:23.00px;font-weight:normal;color:#595959;transform:scaleX(0.9719);transform-origin:0 0;-webkit-text-stroke:0.4px #595959">Gambar 19: Daftar mata diklat (Course) yang dipelajari dalam Angkatan Diklat (Batch)</div>
<div class="a t" style="left:1531.66px;top:1564.21px;font-family:'Liberation Serif', serif;font-size:24.20px;font-weight:normal;color:#000;transform:scaleX(1.0390);transform-origin:0 0;-webkit-text-stroke:0.45px #000">(di halaman berikutnya)</div>
<div class="a t" style="left:2486.95px;top:1643.08px;font-family:'Liberation Serif', serif;font-size:24.00px;font-weight:normal;color:#000;transform:scaleX(1.0455);transform-origin:0 0;-webkit-text-stroke:0.2px #000">32</div>
<div class="a" style="left:1229px;top:134px;width:210px;height:1636px;background:linear-gradient(90deg,rgba(0,0,0,0) 0%,rgba(0,0,0,0.007) 45%,rgba(0,0,0,0.02) 75%,rgba(0,0,0,0.045) 100%)"></div>
<div class="a" style="left:1316px;top:82px;width:248px;height:60px;border-radius:10.5px;background:rgba(125,125,125,0.81)"></div>
<div class="a t" style="left:1325.32px;top:95.02px;font-family:'Liberation Sans', sans-serif;font-size:36.80px;font-weight:normal;color:#fff;transform:scaleX(0.9934);transform-origin:0 0">Page 32 of 64</div>
</body></html>
